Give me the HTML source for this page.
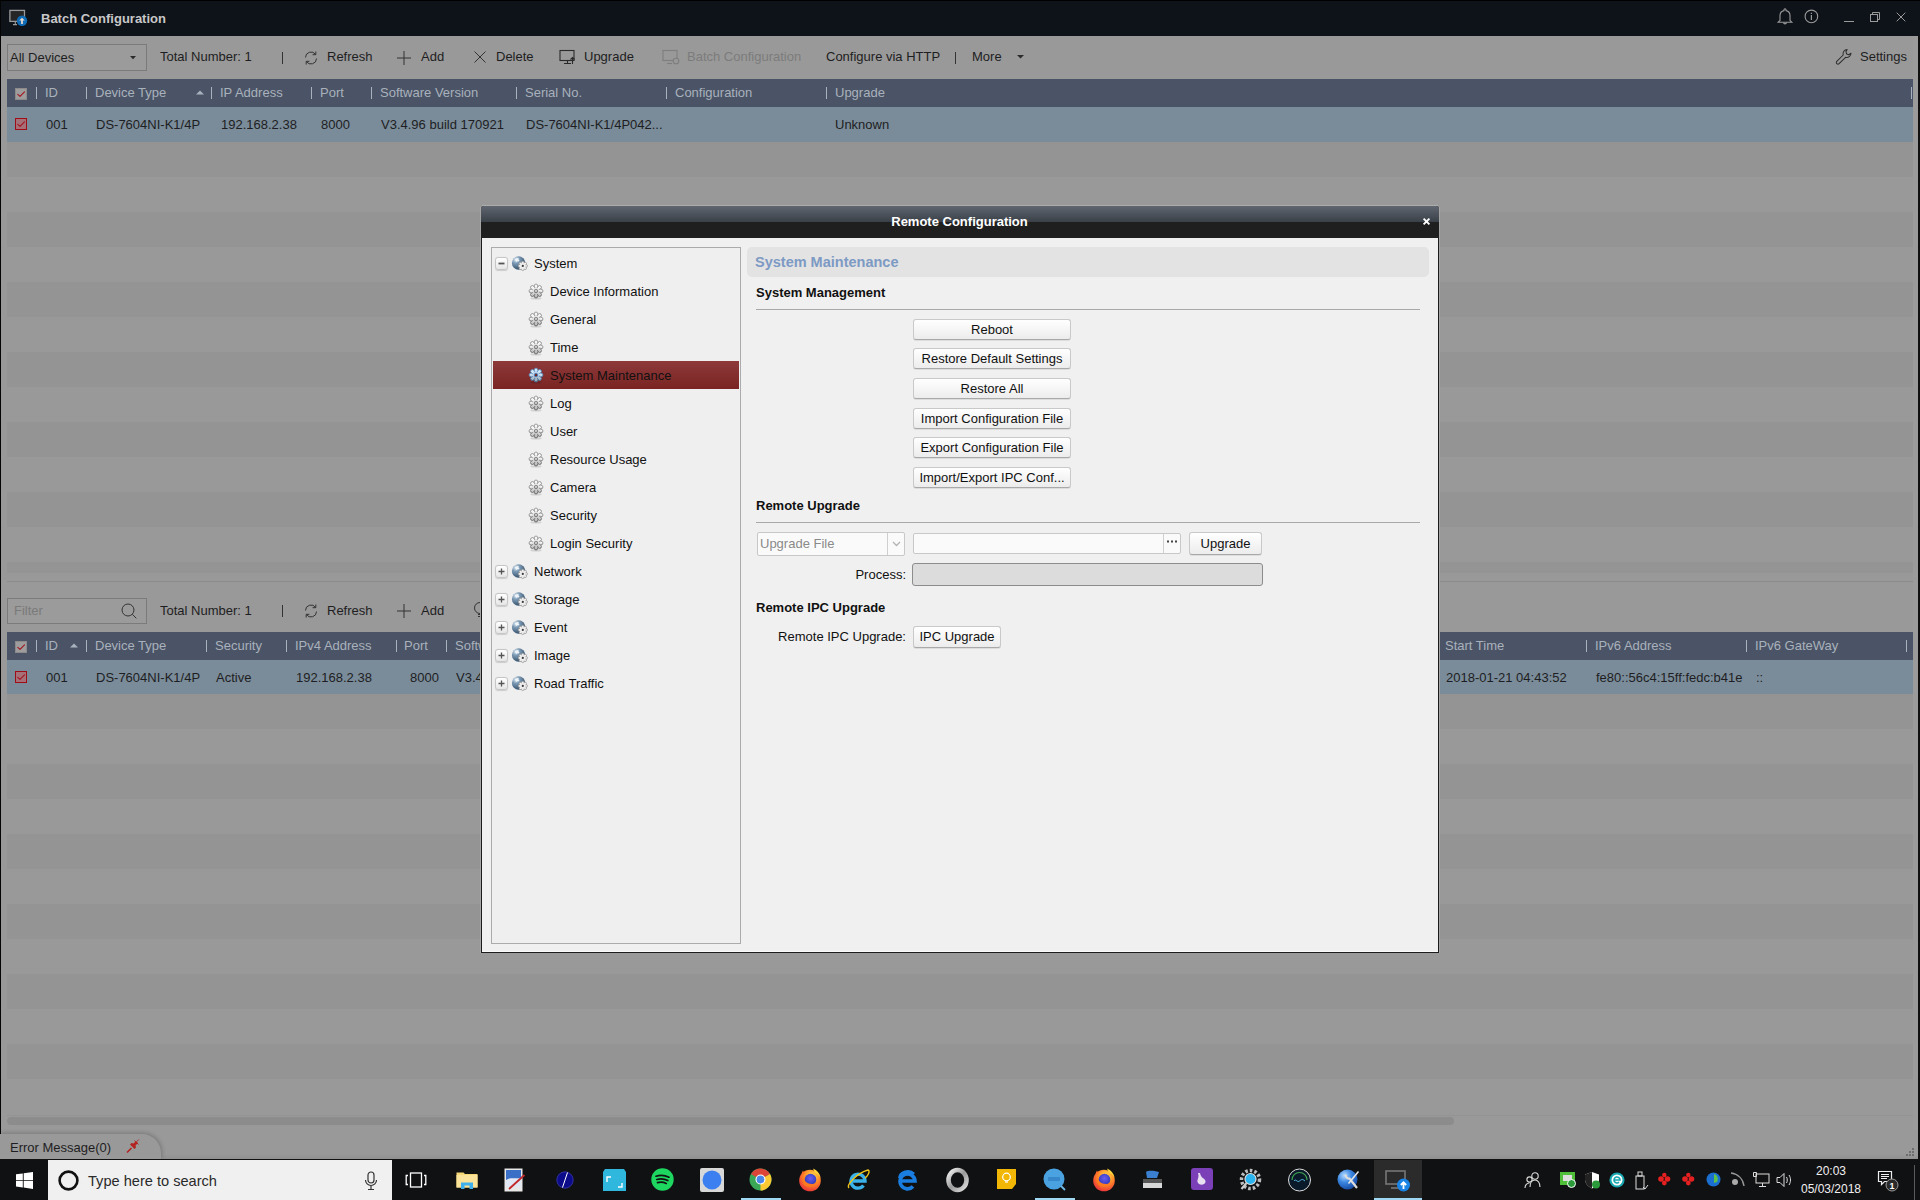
<!DOCTYPE html>
<html><head><meta charset="utf-8"><style>
html,body{margin:0;padding:0;}
body{width:1920px;height:1200px;overflow:hidden;position:relative;background:#999999;font-family:'Liberation Sans', sans-serif;}
.a{position:absolute;box-sizing:border-box;}
.t{position:absolute;white-space:nowrap;}
svg{position:absolute;overflow:visible;}
</style></head><body>
<div class="a" style="left:0px;top:0px;width:1920px;height:36px;background:#0e1219;"></div>
<div class="a" style="left:0px;top:0px;width:1px;height:1134px;background:#050505;"></div>
<div class="a" style="left:0px;top:0px;width:1920px;height:1px;background:#000;"></div>
<svg style="left:0px;top:0px" width="36" height="36" viewBox="0 0 36 36"><rect x="9.9" y="10.4" width="14.6" height="11" fill="#262626" stroke="#9a9a9a" stroke-width="1.3"/><path d="M15.3 22v2.4M13 24.6h4" stroke="#9a9a9a" stroke-width="1.1"/><circle cx="22" cy="20.8" r="5.2" fill="#0f6bb5"/><path d="M21.1 23.9v-3.3h-1.9l2.8-2.8 2.8 2.8h-1.9v3.3z" fill="#e6d9cc"/></svg>
<div class="t" style="left:41px;top:10.50px;font-size:13px;line-height:16px;font-weight:700;color:#c8c8c8;">Batch Configuration</div>
<svg style="left:1777px;top:8px" width="16" height="17" viewBox="0 0 16 17"><path d="M3 12.5V7.5a5 5 0 0 1 4-4.9V1.8a1 1 0 0 1 2 0v.8a5 5 0 0 1 4 4.9v5l1.8 1.7H1.2z" fill="none" stroke="#9a9a9a" stroke-width="1.1"/><path d="M6.5 14.8a1.6 1.6 0 0 0 3 0" stroke="#9a9a9a" stroke-width="1.1" fill="none"/></svg>
<svg style="left:1804px;top:9px" width="15" height="15" viewBox="0 0 15 15"><circle cx="7.4" cy="7.4" r="6.3" fill="none" stroke="#9a9a9a" stroke-width="1.1"/><path d="M7.4 6v5M7.4 3.8v1.2" stroke="#9a9a9a" stroke-width="1.2"/></svg>
<div class="a" style="left:1844px;top:21px;width:10px;height:1px;background:#9a9a9a;"></div>
<svg style="left:1869px;top:11px" width="12" height="12" viewBox="0 0 12 12"><rect x="1.5" y="3.5" width="7" height="7" fill="none" stroke="#9a9a9a" stroke-width="1"/><path d="M3.5 3.5v-2h7v7h-2" fill="none" stroke="#9a9a9a" stroke-width="1"/></svg>
<svg style="left:1896px;top:12px" width="10" height="10" viewBox="0 0 10 10"><path d="M0.7 0.7l8.6 8.6M9.3 0.7l-8.6 8.6" stroke="#9a9a9a" stroke-width="1"/></svg>
<div class="a" style="left:1918px;top:36px;width:2px;height:1124px;background:#101010;"></div>
<div class="a" style="left:1913px;top:36px;width:5px;height:1094px;background:#9b9b9b;"></div>
<div class="a" style="left:7px;top:44px;width:140px;height:27px;border:1px solid #7b7b7b;background:#9b9b9b;"></div>
<div class="t" style="left:10px;top:49.50px;font-size:13px;line-height:16px;font-weight:400;color:#1e1e22;">All Devices</div>
<svg style="left:130px;top:56px" width="6" height="4" viewBox="0 0 6 4"><path d="M0 0h6L3 3.2z" fill="#2a2a2a"/></svg>
<div class="t" style="left:160px;top:49.00px;font-size:13px;line-height:16px;font-weight:400;color:#1e1e22;">Total Number: 1</div>
<div class="a" style="left:282px;top:51.5px;width:1px;height:12px;background:#333;"></div>
<svg style="left:303px;top:49.5px" width="16" height="16" viewBox="0 0 16 16"><path d="M2.5 7.5A5.5 5.5 0 0 1 12.6 4.5M13.5 8.5A5.5 5.5 0 0 1 3.4 11.5" fill="none" stroke="#333" stroke-width="1"/><path d="M12.8 1.5v3.2H9.6M3.2 14.5v-3.2h3.2" fill="none" stroke="#333" stroke-width="1"/></svg>
<div class="t" style="left:327px;top:49.00px;font-size:13px;line-height:16px;font-weight:400;color:#1e1e22;">Refresh</div>
<svg style="left:396px;top:49.5px" width="16" height="16" viewBox="0 0 16 16"><path d="M8 1v14M1 8h14" stroke="#333" stroke-width="1"/></svg>
<div class="t" style="left:421px;top:49.00px;font-size:13px;line-height:16px;font-weight:400;color:#1e1e22;">Add</div>
<svg style="left:473px;top:50px" width="14" height="14" viewBox="0 0 14 14"><path d="M1.5 1.5l11 11M12.5 1.5l-11 11" stroke="#333" stroke-width="1"/></svg>
<div class="t" style="left:496px;top:49.00px;font-size:13px;line-height:16px;font-weight:400;color:#1e1e22;">Delete</div>
<svg style="left:559px;top:49px" width="18" height="16" viewBox="0 0 18 16"><rect x="1" y="1.5" width="14" height="10" fill="none" stroke="#2a2a2a" stroke-width="1.1"/><path d="M5 14.5h7M8.5 11.5v3" stroke="#2a2a2a" stroke-width="1.1"/><path d="M13.5 15V8.5M11.5 10.5l2-2 2 2" stroke="#2a2a2a" stroke-width="1.1" fill="none"/></svg>
<div class="t" style="left:584px;top:49.00px;font-size:13px;line-height:16px;font-weight:400;color:#1e1e22;">Upgrade</div>
<svg style="left:662px;top:49px" width="18" height="16" viewBox="0 0 18 16"><rect x="1" y="1.5" width="14" height="10" fill="none" stroke="#7e7e7e" stroke-width="1.1"/><path d="M5 14.5h5" stroke="#7e7e7e" stroke-width="1.1"/><circle cx="14" cy="12" r="2.8" fill="#999" stroke="#7e7e7e" stroke-width="1.1"/></svg>
<div class="t" style="left:687px;top:49.00px;font-size:13px;line-height:16px;font-weight:400;color:#7c7c7c;">Batch Configuration</div>
<div class="t" style="left:826px;top:49.00px;font-size:13px;line-height:16px;font-weight:400;color:#1e1e22;">Configure via HTTP</div>
<div class="a" style="left:955px;top:52px;width:1px;height:12px;background:#333;"></div>
<div class="t" style="left:972px;top:49.00px;font-size:13px;line-height:16px;font-weight:400;color:#1e1e22;">More</div>
<svg style="left:1017px;top:55px" width="7" height="4" viewBox="0 0 7 4"><path d="M0 0h7L3.5 3.5z" fill="#2a2a2a"/></svg>
<svg style="left:1835px;top:48px" width="18" height="18" viewBox="0 0 18 18"><path d="M12.2 1.6a4.2 4.2 0 0 0-4 5.4L1.8 13.4a1.6 1.6 0 0 0 2.3 2.3l6.5-6.4a4.2 4.2 0 0 0 5.4-4l-2.2 1.5-2.2-.9-.6-2.3z" fill="none" stroke="#2e2e2e" stroke-width="1.05" stroke-linejoin="round"/></svg>
<div class="t" style="left:1860px;top:49.00px;font-size:13px;line-height:16px;font-weight:400;color:#1e1e22;">Settings</div>
<div class="a" style="left:7px;top:107px;width:1906px;height:35px;background:#7a8c9a;"></div>
<div class="a" style="left:7px;top:142px;width:1906px;height:35px;background:#949494;"></div>
<div class="a" style="left:7px;top:212px;width:1906px;height:35px;background:#949494;"></div>
<div class="a" style="left:7px;top:282px;width:1906px;height:35px;background:#949494;"></div>
<div class="a" style="left:7px;top:352px;width:1906px;height:35px;background:#949494;"></div>
<div class="a" style="left:7px;top:422px;width:1906px;height:35px;background:#949494;"></div>
<div class="a" style="left:7px;top:492px;width:1906px;height:35px;background:#949494;"></div>
<div class="a" style="left:7px;top:562px;width:1906px;height:11px;background:#949494;"></div>
<div class="a" style="left:7px;top:79px;width:1906px;height:28px;background:#4a5466;"></div>
<div class="a" style="left:15px;top:87.5px;width:12px;height:12px;background:#9e9c9c;border:1px solid #8c8a8a;"></div>
<svg style="left:17px;top:90.5px" width="9" height="7" viewBox="0 0 9 7"><path d="M0.8 3.3L3 5.3 7.5 0.8" fill="none" stroke="#a31420" stroke-width="1.1" stroke-linecap="round" stroke-linejoin="round"/></svg>
<div class="a" style="left:36px;top:87px;width:1px;height:12px;background:#a9b1bc;"></div>
<div class="t" style="left:45px;top:85.00px;font-size:13px;line-height:16px;font-weight:400;color:#a9b1bc;">ID</div>
<div class="a" style="left:86px;top:87px;width:1px;height:12px;background:#a9b1bc;"></div>
<div class="t" style="left:95px;top:85.00px;font-size:13px;line-height:16px;font-weight:400;color:#a9b1bc;">Device Type</div>
<div class="a" style="left:211px;top:87px;width:1px;height:12px;background:#a9b1bc;"></div>
<div class="t" style="left:220px;top:85.00px;font-size:13px;line-height:16px;font-weight:400;color:#a9b1bc;">IP Address</div>
<div class="a" style="left:311px;top:87px;width:1px;height:12px;background:#a9b1bc;"></div>
<div class="t" style="left:320px;top:85.00px;font-size:13px;line-height:16px;font-weight:400;color:#a9b1bc;">Port</div>
<div class="a" style="left:371px;top:87px;width:1px;height:12px;background:#a9b1bc;"></div>
<div class="t" style="left:380px;top:85.00px;font-size:13px;line-height:16px;font-weight:400;color:#a9b1bc;">Software Version</div>
<div class="a" style="left:516px;top:87px;width:1px;height:12px;background:#a9b1bc;"></div>
<div class="t" style="left:525px;top:85.00px;font-size:13px;line-height:16px;font-weight:400;color:#a9b1bc;">Serial No.</div>
<div class="a" style="left:666px;top:87px;width:1px;height:12px;background:#a9b1bc;"></div>
<div class="t" style="left:675px;top:85.00px;font-size:13px;line-height:16px;font-weight:400;color:#a9b1bc;">Configuration</div>
<div class="a" style="left:826px;top:87px;width:1px;height:12px;background:#a9b1bc;"></div>
<div class="t" style="left:835px;top:85.00px;font-size:13px;line-height:16px;font-weight:400;color:#a9b1bc;">Upgrade</div>
<div class="a" style="left:1911px;top:87px;width:1px;height:12px;background:#a9b1bc;"></div>
<svg style="left:196px;top:90px" width="8" height="5" viewBox="0 0 8 5"><path d="M0 4.5h8L4 0.5z" fill="#a9b1bc"/></svg>
<div class="a" style="left:15px;top:118px;width:12px;height:12px;background:#a67078;border:1.5px solid #a00c16;"></div>
<svg style="left:17px;top:120.5px" width="9" height="7" viewBox="0 0 9 7"><path d="M0.8 3.3L3 5.3 7.5 0.8" fill="none" stroke="#a31420" stroke-width="1.1" stroke-linecap="round" stroke-linejoin="round"/></svg>
<div class="t" style="left:46px;top:116.50px;font-size:13px;line-height:16px;font-weight:400;color:#1e1e22;">001</div>
<div class="t" style="left:96px;top:116.50px;font-size:13px;line-height:16px;font-weight:400;color:#1e1e22;">DS-7604NI-K1/4P</div>
<div class="t" style="left:221px;top:116.50px;font-size:13px;line-height:16px;font-weight:400;color:#1e1e22;">192.168.2.38</div>
<div class="t" style="left:321px;top:116.50px;font-size:13px;line-height:16px;font-weight:400;color:#1e1e22;">8000</div>
<div class="t" style="left:381px;top:116.50px;font-size:13px;line-height:16px;font-weight:400;color:#1e1e22;">V3.4.96 build 170921</div>
<div class="t" style="left:526px;top:116.50px;font-size:13px;line-height:16px;font-weight:400;color:#1e1e22;">DS-7604NI-K1/4P042...</div>
<div class="t" style="left:835px;top:116.50px;font-size:13px;line-height:16px;font-weight:400;color:#1e1e22;">Unknown</div>
<div class="a" style="left:7px;top:581px;width:1906px;height:1px;background:#8a8a8a;"></div>
<div class="a" style="left:7px;top:598px;width:140px;height:26px;border:1px solid #7b7b7b;background:#9b9b9b;"></div>
<div class="t" style="left:14px;top:603.00px;font-size:13px;line-height:16px;font-weight:400;color:#7a7a7a;">Filter</div>
<svg style="left:120px;top:602px" width="18" height="18" viewBox="0 0 18 18"><circle cx="8" cy="8" r="6" fill="none" stroke="#333" stroke-width="1"/><path d="M12.3 12.3l4 4" stroke="#333" stroke-width="1"/></svg>
<div class="t" style="left:160px;top:602.50px;font-size:13px;line-height:16px;font-weight:400;color:#1e1e22;">Total Number: 1</div>
<div class="a" style="left:282px;top:605px;width:1px;height:12px;background:#333;"></div>
<svg style="left:303px;top:603px" width="16" height="16" viewBox="0 0 16 16"><path d="M2.5 7.5A5.5 5.5 0 0 1 12.6 4.5M13.5 8.5A5.5 5.5 0 0 1 3.4 11.5" fill="none" stroke="#333" stroke-width="1"/><path d="M12.8 1.5v3.2H9.6M3.2 14.5v-3.2h3.2" fill="none" stroke="#333" stroke-width="1"/></svg>
<div class="t" style="left:327px;top:602.50px;font-size:13px;line-height:16px;font-weight:400;color:#1e1e22;">Refresh</div>
<svg style="left:396px;top:603px" width="16" height="16" viewBox="0 0 16 16"><path d="M8 1v14M1 8h14" stroke="#333" stroke-width="1"/></svg>
<div class="t" style="left:421px;top:602.50px;font-size:13px;line-height:16px;font-weight:400;color:#1e1e22;">Add</div>
<svg style="left:472px;top:601px" width="16" height="20" viewBox="0 0 16 20"><circle cx="8" cy="7" r="5.5" fill="none" stroke="#333" stroke-width="1"/><path d="M6 13.5h4M6 15.5h4" stroke="#333" stroke-width="1"/></svg>
<div class="a" style="left:7px;top:659px;width:1906px;height:35px;background:#7a8c9a;"></div>
<div class="a" style="left:7px;top:694px;width:1906px;height:35px;background:#949494;"></div>
<div class="a" style="left:7px;top:764px;width:1906px;height:35px;background:#949494;"></div>
<div class="a" style="left:7px;top:834px;width:1906px;height:35px;background:#949494;"></div>
<div class="a" style="left:7px;top:904px;width:1906px;height:35px;background:#949494;"></div>
<div class="a" style="left:7px;top:974px;width:1906px;height:35px;background:#949494;"></div>
<div class="a" style="left:7px;top:1044px;width:1906px;height:35px;background:#949494;"></div>
<div class="a" style="left:7px;top:632px;width:1906px;height:28px;background:#4a5466;"></div>
<div class="a" style="left:15px;top:640.5px;width:12px;height:12px;background:#9e9c9c;border:1px solid #8c8a8a;"></div>
<svg style="left:17px;top:643.5px" width="9" height="7" viewBox="0 0 9 7"><path d="M0.8 3.3L3 5.3 7.5 0.8" fill="none" stroke="#a31420" stroke-width="1.1" stroke-linecap="round" stroke-linejoin="round"/></svg>
<div class="a" style="left:36px;top:640px;width:1px;height:12px;background:#a9b1bc;"></div>
<div class="t" style="left:45px;top:638.00px;font-size:13px;line-height:16px;font-weight:400;color:#a9b1bc;">ID</div>
<div class="a" style="left:86px;top:640px;width:1px;height:12px;background:#a9b1bc;"></div>
<div class="t" style="left:95px;top:638.00px;font-size:13px;line-height:16px;font-weight:400;color:#a9b1bc;">Device Type</div>
<div class="a" style="left:206px;top:640px;width:1px;height:12px;background:#a9b1bc;"></div>
<div class="t" style="left:215px;top:638.00px;font-size:13px;line-height:16px;font-weight:400;color:#a9b1bc;">Security</div>
<div class="a" style="left:286px;top:640px;width:1px;height:12px;background:#a9b1bc;"></div>
<div class="t" style="left:295px;top:638.00px;font-size:13px;line-height:16px;font-weight:400;color:#a9b1bc;">IPv4 Address</div>
<div class="a" style="left:396px;top:640px;width:1px;height:12px;background:#a9b1bc;"></div>
<div class="t" style="left:404px;top:638.00px;font-size:13px;line-height:16px;font-weight:400;color:#a9b1bc;">Port</div>
<div class="a" style="left:446px;top:640px;width:1px;height:12px;background:#a9b1bc;"></div>
<div class="t" style="left:455px;top:638.00px;font-size:13px;line-height:16px;font-weight:400;color:#a9b1bc;">Software</div>
<div class="a" style="left:1436px;top:640px;width:1px;height:12px;background:#a9b1bc;"></div>
<div class="t" style="left:1445px;top:638.00px;font-size:13px;line-height:16px;font-weight:400;color:#a9b1bc;">Start Time</div>
<div class="a" style="left:1586px;top:640px;width:1px;height:12px;background:#a9b1bc;"></div>
<div class="t" style="left:1595px;top:638.00px;font-size:13px;line-height:16px;font-weight:400;color:#a9b1bc;">IPv6 Address</div>
<div class="a" style="left:1746px;top:640px;width:1px;height:12px;background:#a9b1bc;"></div>
<div class="t" style="left:1755px;top:638.00px;font-size:13px;line-height:16px;font-weight:400;color:#a9b1bc;">IPv6 GateWay</div>
<div class="a" style="left:1906px;top:640px;width:1px;height:12px;background:#a9b1bc;"></div>
<svg style="left:70px;top:643px" width="8" height="5" viewBox="0 0 8 5"><path d="M0 4.5h8L4 0.5z" fill="#a9b1bc"/></svg>
<div class="a" style="left:15px;top:671px;width:12px;height:12px;background:#a67078;border:1.5px solid #a00c16;"></div>
<svg style="left:17px;top:673.5px" width="9" height="7" viewBox="0 0 9 7"><path d="M0.8 3.3L3 5.3 7.5 0.8" fill="none" stroke="#a31420" stroke-width="1.1" stroke-linecap="round" stroke-linejoin="round"/></svg>
<div class="t" style="left:46px;top:669.50px;font-size:13px;line-height:16px;font-weight:400;color:#1e1e22;">001</div>
<div class="t" style="left:96px;top:669.50px;font-size:13px;line-height:16px;font-weight:400;color:#1e1e22;">DS-7604NI-K1/4P</div>
<div class="t" style="left:216px;top:669.50px;font-size:13px;line-height:16px;font-weight:400;color:#1e1e22;">Active</div>
<div class="t" style="left:296px;top:669.50px;font-size:13px;line-height:16px;font-weight:400;color:#1e1e22;">192.168.2.38</div>
<div class="t" style="left:410px;top:669.50px;font-size:13px;line-height:16px;font-weight:400;color:#1e1e22;">8000</div>
<div class="t" style="left:456px;top:669.50px;font-size:13px;line-height:16px;font-weight:400;color:#1e1e22;">V3.4.96</div>
<div class="t" style="left:1446px;top:669.50px;font-size:13px;line-height:16px;font-weight:400;color:#1e1e22;">2018-01-21 04:43:52</div>
<div class="t" style="left:1596px;top:669.50px;font-size:13px;line-height:16px;font-weight:400;color:#1e1e22;">fe80::56c4:15ff:fedc:b41e</div>
<div class="t" style="left:1756px;top:669.50px;font-size:13px;line-height:16px;font-weight:400;color:#1e1e22;">::</div>
<div class="a" style="left:7px;top:1117px;width:1447px;height:8px;background:#8c8c8c;border-radius:4px;"></div>
<div class="a" style="left:7px;top:1115px;width:1906px;height:1px;background:#939393;"></div>
<div class="a" style="left:1px;top:1154px;width:1917px;height:5px;background:linear-gradient(rgba(0,0,0,0),rgba(0,0,0,0.06));"></div>
<div class="a" style="left:0px;top:1133.5px;width:161px;height:25.5px;background:#999999;border-top-right-radius:19px;box-shadow:1px -1px 4px rgba(0,0,0,0.22);"></div>
<div class="a" style="left:0px;top:1159px;width:1920px;height:1px;background:#111;"></div>
<div class="a" style="left:1912px;top:1148px;width:2px;height:2px;background:#6e6e6e;"></div>
<div class="a" style="left:1909px;top:1151px;width:2px;height:2px;background:#6e6e6e;"></div>
<div class="a" style="left:1912px;top:1151px;width:2px;height:2px;background:#6e6e6e;"></div>
<div class="a" style="left:1906px;top:1154px;width:2px;height:2px;background:#6e6e6e;"></div>
<div class="a" style="left:1909px;top:1154px;width:2px;height:2px;background:#6e6e6e;"></div>
<div class="a" style="left:1912px;top:1154px;width:2px;height:2px;background:#6e6e6e;"></div>
<div class="t" style="left:10px;top:1139.50px;font-size:13px;line-height:16px;font-weight:400;color:#1e1e22;">Error Message(0)</div>
<svg style="left:125px;top:1138px" width="16" height="16" viewBox="0 0 16 16"><path d="M2 14.5l4.5-4.5" stroke="#b52222" stroke-width="1.6"/><path d="M5 6.5l4.5 4.5 1.5-1.5-0.5-2 2.5-2.5-2-2-2.5 2.5-2-0.5z" fill="#b52222"/><path d="M9.5 2.5l4 4M13.8 1.5l-2 2" stroke="#b52222" stroke-width="1"/></svg>
<div class="a" style="left:482px;top:205px;width:956px;height:1px;background:#adadad;"></div>
<div class="a" style="left:480px;top:207px;width:1px;height:746px;background:#a6a6a6;"></div>
<div class="a" style="left:1439px;top:207px;width:1px;height:746px;background:#a6a6a6;"></div>
<div class="a" style="left:481px;top:206px;width:958px;height:747px;background:#1c1c1c;border-radius:3px 3px 0 0;"></div>
<div class="a" style="left:481px;top:206px;width:958px;height:16px;background:linear-gradient(#60666f,#3a4048);border-radius:3px 3px 0 0;"></div>
<div class="a" style="left:481px;top:222px;width:958px;height:16px;background:#1f1f1f;"></div>
<div class="a" style="left:482px;top:238px;width:956px;height:714px;background:#f0f0f0;border-bottom:1px solid #fafafa;"></div>
<div class="t" style="left:659.5px;width:600px;text-align:center;top:213.50px;font-size:13px;line-height:16px;font-weight:700;color:#ffffff;">Remote Configuration</div>
<svg style="left:1423px;top:217.5px" width="7" height="7" viewBox="0 0 7 7"><path d="M0.6 0.6l5.8 5.8M6.4 0.6l-5.8 5.8" stroke="#fff" stroke-width="1.9"/></svg>
<div class="a" style="left:491px;top:247px;width:250px;height:697px;background:#efefef;border:1px solid #ababab;"></div>
<div class="a" style="left:493px;top:361px;width:246px;height:28px;background:linear-gradient(#8e3a3a,#7a2323);"></div>
<div class="a" style="left:494.5px;top:256.5px;width:13px;height:13px;background:linear-gradient(#ffffff,#e6e6e6);border:1px solid #c6c6c6;border-radius:3px;box-shadow:0 0.5px 1px rgba(0,0,0,0.15);"></div>
<svg style="left:497.5px;top:259.5px" width="7" height="7" viewBox="0 0 7 7"><path d="M0.5 3.5h6" stroke="#555" stroke-width="1.8"/></svg>
<svg style="left:511px;top:256px" width="18" height="18" viewBox="0 0 18 18"><defs><radialGradient id="gg263" cx="30%" cy="25%" r="80%"><stop offset="0" stop-color="#e4eef6"/><stop offset="0.35" stop-color="#7d9bb6"/><stop offset="1" stop-color="#2f4b66"/></radialGradient></defs><circle cx="7.6" cy="7" r="6.7" fill="url(#gg263)"/><path d="M4 3.2c1.2-1 2.8-1.3 4-.8l-.6 1.4 1.2.4-1.5 1.5-.8-.6-1 1.2-.7-1.5z" fill="#f4f8fb" opacity="0.9"/><circle cx="15.10" cy="9.90" r="1.35" fill="#f2f2f2" stroke="#8c8c8c" stroke-width="0.7"/><circle cx="14.13" cy="12.23" r="1.35" fill="#f2f2f2" stroke="#8c8c8c" stroke-width="0.7"/><circle cx="11.80" cy="13.20" r="1.35" fill="#f2f2f2" stroke="#8c8c8c" stroke-width="0.7"/><circle cx="9.47" cy="12.23" r="1.35" fill="#f2f2f2" stroke="#8c8c8c" stroke-width="0.7"/><circle cx="8.50" cy="9.90" r="1.35" fill="#f2f2f2" stroke="#8c8c8c" stroke-width="0.7"/><circle cx="9.47" cy="7.57" r="1.35" fill="#f2f2f2" stroke="#8c8c8c" stroke-width="0.7"/><circle cx="11.80" cy="6.60" r="1.35" fill="#f2f2f2" stroke="#8c8c8c" stroke-width="0.7"/><circle cx="14.13" cy="7.57" r="1.35" fill="#f2f2f2" stroke="#8c8c8c" stroke-width="0.7"/><circle cx="11.8" cy="9.9" r="3" fill="#efefef"/><circle cx="11.8" cy="9.9" r="1.1" fill="#3a3a3a"/></svg>
<div class="t" style="left:534px;top:255.50px;font-size:13px;line-height:16px;font-weight:400;color:#111;">System</div>
<svg style="left:528px;top:283px" width="16" height="17" viewBox="0 0 16 17"><defs><clipPath id="gc1"><circle cx="8" cy="8" r="5.6"/><ellipse cx="8" cy="3.5" rx="2.3" ry="2.9" transform="rotate(0 8 8)"/><ellipse cx="8" cy="3.5" rx="2.3" ry="2.9" transform="rotate(45 8 8)"/><ellipse cx="8" cy="3.5" rx="2.3" ry="2.9" transform="rotate(90 8 8)"/><ellipse cx="8" cy="3.5" rx="2.3" ry="2.9" transform="rotate(135 8 8)"/><ellipse cx="8" cy="3.5" rx="2.3" ry="2.9" transform="rotate(180 8 8)"/><ellipse cx="8" cy="3.5" rx="2.3" ry="2.9" transform="rotate(225 8 8)"/><ellipse cx="8" cy="3.5" rx="2.3" ry="2.9" transform="rotate(270 8 8)"/><ellipse cx="8" cy="3.5" rx="2.3" ry="2.9" transform="rotate(315 8 8)"/></clipPath><linearGradient id="gs1" x1="0" y1="0" x2="0" y2="1"><stop offset="0" stop-color="#000" stop-opacity="0"/><stop offset="0.45" stop-color="#000" stop-opacity="0.02"/><stop offset="1" stop-color="#000" stop-opacity="0.35"/></linearGradient></defs><ellipse cx="8" cy="15.4" rx="5.5" ry="1.1" fill="#000" opacity="0.13"/><circle cx="8" cy="8" r="5.6" fill="#8a8a8a"/><ellipse cx="8" cy="3.5" rx="1.9" ry="2.5" fill="#f8f8f8" stroke="#858585" stroke-width="0.75" transform="rotate(0 8 8)"/><ellipse cx="8" cy="3.5" rx="1.9" ry="2.5" fill="#f8f8f8" stroke="#858585" stroke-width="0.75" transform="rotate(45 8 8)"/><ellipse cx="8" cy="3.5" rx="1.9" ry="2.5" fill="#f8f8f8" stroke="#858585" stroke-width="0.75" transform="rotate(90 8 8)"/><ellipse cx="8" cy="3.5" rx="1.9" ry="2.5" fill="#f8f8f8" stroke="#858585" stroke-width="0.75" transform="rotate(135 8 8)"/><ellipse cx="8" cy="3.5" rx="1.9" ry="2.5" fill="#f8f8f8" stroke="#858585" stroke-width="0.75" transform="rotate(180 8 8)"/><ellipse cx="8" cy="3.5" rx="1.9" ry="2.5" fill="#f8f8f8" stroke="#858585" stroke-width="0.75" transform="rotate(225 8 8)"/><ellipse cx="8" cy="3.5" rx="1.9" ry="2.5" fill="#f8f8f8" stroke="#858585" stroke-width="0.75" transform="rotate(270 8 8)"/><ellipse cx="8" cy="3.5" rx="1.9" ry="2.5" fill="#f8f8f8" stroke="#858585" stroke-width="0.75" transform="rotate(315 8 8)"/><circle cx="8" cy="8" r="3.3" fill="#ececec"/><circle cx="8" cy="8" r="1.7" fill="#cfcfcf" stroke="#858585" stroke-width="0.9"/><rect x="0" y="0" width="16" height="16" fill="url(#gs1)" clip-path="url(#gc1)"/></svg>
<div class="t" style="left:550px;top:283.50px;font-size:13px;line-height:16px;font-weight:400;color:#111;">Device Information</div>
<svg style="left:528px;top:311px" width="16" height="17" viewBox="0 0 16 17"><defs><clipPath id="gc2"><circle cx="8" cy="8" r="5.6"/><ellipse cx="8" cy="3.5" rx="2.3" ry="2.9" transform="rotate(0 8 8)"/><ellipse cx="8" cy="3.5" rx="2.3" ry="2.9" transform="rotate(45 8 8)"/><ellipse cx="8" cy="3.5" rx="2.3" ry="2.9" transform="rotate(90 8 8)"/><ellipse cx="8" cy="3.5" rx="2.3" ry="2.9" transform="rotate(135 8 8)"/><ellipse cx="8" cy="3.5" rx="2.3" ry="2.9" transform="rotate(180 8 8)"/><ellipse cx="8" cy="3.5" rx="2.3" ry="2.9" transform="rotate(225 8 8)"/><ellipse cx="8" cy="3.5" rx="2.3" ry="2.9" transform="rotate(270 8 8)"/><ellipse cx="8" cy="3.5" rx="2.3" ry="2.9" transform="rotate(315 8 8)"/></clipPath><linearGradient id="gs2" x1="0" y1="0" x2="0" y2="1"><stop offset="0" stop-color="#000" stop-opacity="0"/><stop offset="0.45" stop-color="#000" stop-opacity="0.02"/><stop offset="1" stop-color="#000" stop-opacity="0.35"/></linearGradient></defs><ellipse cx="8" cy="15.4" rx="5.5" ry="1.1" fill="#000" opacity="0.13"/><circle cx="8" cy="8" r="5.6" fill="#8a8a8a"/><ellipse cx="8" cy="3.5" rx="1.9" ry="2.5" fill="#f8f8f8" stroke="#858585" stroke-width="0.75" transform="rotate(0 8 8)"/><ellipse cx="8" cy="3.5" rx="1.9" ry="2.5" fill="#f8f8f8" stroke="#858585" stroke-width="0.75" transform="rotate(45 8 8)"/><ellipse cx="8" cy="3.5" rx="1.9" ry="2.5" fill="#f8f8f8" stroke="#858585" stroke-width="0.75" transform="rotate(90 8 8)"/><ellipse cx="8" cy="3.5" rx="1.9" ry="2.5" fill="#f8f8f8" stroke="#858585" stroke-width="0.75" transform="rotate(135 8 8)"/><ellipse cx="8" cy="3.5" rx="1.9" ry="2.5" fill="#f8f8f8" stroke="#858585" stroke-width="0.75" transform="rotate(180 8 8)"/><ellipse cx="8" cy="3.5" rx="1.9" ry="2.5" fill="#f8f8f8" stroke="#858585" stroke-width="0.75" transform="rotate(225 8 8)"/><ellipse cx="8" cy="3.5" rx="1.9" ry="2.5" fill="#f8f8f8" stroke="#858585" stroke-width="0.75" transform="rotate(270 8 8)"/><ellipse cx="8" cy="3.5" rx="1.9" ry="2.5" fill="#f8f8f8" stroke="#858585" stroke-width="0.75" transform="rotate(315 8 8)"/><circle cx="8" cy="8" r="3.3" fill="#ececec"/><circle cx="8" cy="8" r="1.7" fill="#cfcfcf" stroke="#858585" stroke-width="0.9"/><rect x="0" y="0" width="16" height="16" fill="url(#gs2)" clip-path="url(#gc2)"/></svg>
<div class="t" style="left:550px;top:311.50px;font-size:13px;line-height:16px;font-weight:400;color:#111;">General</div>
<svg style="left:528px;top:339px" width="16" height="17" viewBox="0 0 16 17"><defs><clipPath id="gc3"><circle cx="8" cy="8" r="5.6"/><ellipse cx="8" cy="3.5" rx="2.3" ry="2.9" transform="rotate(0 8 8)"/><ellipse cx="8" cy="3.5" rx="2.3" ry="2.9" transform="rotate(45 8 8)"/><ellipse cx="8" cy="3.5" rx="2.3" ry="2.9" transform="rotate(90 8 8)"/><ellipse cx="8" cy="3.5" rx="2.3" ry="2.9" transform="rotate(135 8 8)"/><ellipse cx="8" cy="3.5" rx="2.3" ry="2.9" transform="rotate(180 8 8)"/><ellipse cx="8" cy="3.5" rx="2.3" ry="2.9" transform="rotate(225 8 8)"/><ellipse cx="8" cy="3.5" rx="2.3" ry="2.9" transform="rotate(270 8 8)"/><ellipse cx="8" cy="3.5" rx="2.3" ry="2.9" transform="rotate(315 8 8)"/></clipPath><linearGradient id="gs3" x1="0" y1="0" x2="0" y2="1"><stop offset="0" stop-color="#000" stop-opacity="0"/><stop offset="0.45" stop-color="#000" stop-opacity="0.02"/><stop offset="1" stop-color="#000" stop-opacity="0.35"/></linearGradient></defs><ellipse cx="8" cy="15.4" rx="5.5" ry="1.1" fill="#000" opacity="0.13"/><circle cx="8" cy="8" r="5.6" fill="#8a8a8a"/><ellipse cx="8" cy="3.5" rx="1.9" ry="2.5" fill="#f8f8f8" stroke="#858585" stroke-width="0.75" transform="rotate(0 8 8)"/><ellipse cx="8" cy="3.5" rx="1.9" ry="2.5" fill="#f8f8f8" stroke="#858585" stroke-width="0.75" transform="rotate(45 8 8)"/><ellipse cx="8" cy="3.5" rx="1.9" ry="2.5" fill="#f8f8f8" stroke="#858585" stroke-width="0.75" transform="rotate(90 8 8)"/><ellipse cx="8" cy="3.5" rx="1.9" ry="2.5" fill="#f8f8f8" stroke="#858585" stroke-width="0.75" transform="rotate(135 8 8)"/><ellipse cx="8" cy="3.5" rx="1.9" ry="2.5" fill="#f8f8f8" stroke="#858585" stroke-width="0.75" transform="rotate(180 8 8)"/><ellipse cx="8" cy="3.5" rx="1.9" ry="2.5" fill="#f8f8f8" stroke="#858585" stroke-width="0.75" transform="rotate(225 8 8)"/><ellipse cx="8" cy="3.5" rx="1.9" ry="2.5" fill="#f8f8f8" stroke="#858585" stroke-width="0.75" transform="rotate(270 8 8)"/><ellipse cx="8" cy="3.5" rx="1.9" ry="2.5" fill="#f8f8f8" stroke="#858585" stroke-width="0.75" transform="rotate(315 8 8)"/><circle cx="8" cy="8" r="3.3" fill="#ececec"/><circle cx="8" cy="8" r="1.7" fill="#cfcfcf" stroke="#858585" stroke-width="0.9"/><rect x="0" y="0" width="16" height="16" fill="url(#gs3)" clip-path="url(#gc3)"/></svg>
<div class="t" style="left:550px;top:339.50px;font-size:13px;line-height:16px;font-weight:400;color:#111;">Time</div>
<svg style="left:528px;top:367px" width="16" height="17" viewBox="0 0 16 17"><defs><clipPath id="gc4"><circle cx="8" cy="8" r="5.6"/><ellipse cx="8" cy="3.5" rx="2.3" ry="2.9" transform="rotate(0 8 8)"/><ellipse cx="8" cy="3.5" rx="2.3" ry="2.9" transform="rotate(45 8 8)"/><ellipse cx="8" cy="3.5" rx="2.3" ry="2.9" transform="rotate(90 8 8)"/><ellipse cx="8" cy="3.5" rx="2.3" ry="2.9" transform="rotate(135 8 8)"/><ellipse cx="8" cy="3.5" rx="2.3" ry="2.9" transform="rotate(180 8 8)"/><ellipse cx="8" cy="3.5" rx="2.3" ry="2.9" transform="rotate(225 8 8)"/><ellipse cx="8" cy="3.5" rx="2.3" ry="2.9" transform="rotate(270 8 8)"/><ellipse cx="8" cy="3.5" rx="2.3" ry="2.9" transform="rotate(315 8 8)"/></clipPath><linearGradient id="gs4" x1="0" y1="0" x2="0" y2="1"><stop offset="0" stop-color="#000" stop-opacity="0"/><stop offset="0.45" stop-color="#000" stop-opacity="0.02"/><stop offset="1" stop-color="#000" stop-opacity="0.35"/></linearGradient></defs><ellipse cx="8" cy="15.4" rx="5.5" ry="1.1" fill="#000" opacity="0.13"/><circle cx="8" cy="8" r="5.6" fill="#5a8fc4"/><ellipse cx="8" cy="3.5" rx="1.9" ry="2.5" fill="#d4e8f8" stroke="#4f86be" stroke-width="0.75" transform="rotate(0 8 8)"/><ellipse cx="8" cy="3.5" rx="1.9" ry="2.5" fill="#d4e8f8" stroke="#4f86be" stroke-width="0.75" transform="rotate(45 8 8)"/><ellipse cx="8" cy="3.5" rx="1.9" ry="2.5" fill="#d4e8f8" stroke="#4f86be" stroke-width="0.75" transform="rotate(90 8 8)"/><ellipse cx="8" cy="3.5" rx="1.9" ry="2.5" fill="#d4e8f8" stroke="#4f86be" stroke-width="0.75" transform="rotate(135 8 8)"/><ellipse cx="8" cy="3.5" rx="1.9" ry="2.5" fill="#d4e8f8" stroke="#4f86be" stroke-width="0.75" transform="rotate(180 8 8)"/><ellipse cx="8" cy="3.5" rx="1.9" ry="2.5" fill="#d4e8f8" stroke="#4f86be" stroke-width="0.75" transform="rotate(225 8 8)"/><ellipse cx="8" cy="3.5" rx="1.9" ry="2.5" fill="#d4e8f8" stroke="#4f86be" stroke-width="0.75" transform="rotate(270 8 8)"/><ellipse cx="8" cy="3.5" rx="1.9" ry="2.5" fill="#d4e8f8" stroke="#4f86be" stroke-width="0.75" transform="rotate(315 8 8)"/><circle cx="8" cy="8" r="3.3" fill="#bcd8f0"/><circle cx="8" cy="8" r="1.7" fill="#7a2a2a" stroke="#4f86be" stroke-width="0.9"/><rect x="0" y="0" width="16" height="16" fill="url(#gs4)" clip-path="url(#gc4)"/></svg>
<div class="t" style="left:550px;top:367.50px;font-size:13px;line-height:16px;font-weight:400;color:#111;">System Maintenance</div>
<svg style="left:528px;top:395px" width="16" height="17" viewBox="0 0 16 17"><defs><clipPath id="gc5"><circle cx="8" cy="8" r="5.6"/><ellipse cx="8" cy="3.5" rx="2.3" ry="2.9" transform="rotate(0 8 8)"/><ellipse cx="8" cy="3.5" rx="2.3" ry="2.9" transform="rotate(45 8 8)"/><ellipse cx="8" cy="3.5" rx="2.3" ry="2.9" transform="rotate(90 8 8)"/><ellipse cx="8" cy="3.5" rx="2.3" ry="2.9" transform="rotate(135 8 8)"/><ellipse cx="8" cy="3.5" rx="2.3" ry="2.9" transform="rotate(180 8 8)"/><ellipse cx="8" cy="3.5" rx="2.3" ry="2.9" transform="rotate(225 8 8)"/><ellipse cx="8" cy="3.5" rx="2.3" ry="2.9" transform="rotate(270 8 8)"/><ellipse cx="8" cy="3.5" rx="2.3" ry="2.9" transform="rotate(315 8 8)"/></clipPath><linearGradient id="gs5" x1="0" y1="0" x2="0" y2="1"><stop offset="0" stop-color="#000" stop-opacity="0"/><stop offset="0.45" stop-color="#000" stop-opacity="0.02"/><stop offset="1" stop-color="#000" stop-opacity="0.35"/></linearGradient></defs><ellipse cx="8" cy="15.4" rx="5.5" ry="1.1" fill="#000" opacity="0.13"/><circle cx="8" cy="8" r="5.6" fill="#8a8a8a"/><ellipse cx="8" cy="3.5" rx="1.9" ry="2.5" fill="#f8f8f8" stroke="#858585" stroke-width="0.75" transform="rotate(0 8 8)"/><ellipse cx="8" cy="3.5" rx="1.9" ry="2.5" fill="#f8f8f8" stroke="#858585" stroke-width="0.75" transform="rotate(45 8 8)"/><ellipse cx="8" cy="3.5" rx="1.9" ry="2.5" fill="#f8f8f8" stroke="#858585" stroke-width="0.75" transform="rotate(90 8 8)"/><ellipse cx="8" cy="3.5" rx="1.9" ry="2.5" fill="#f8f8f8" stroke="#858585" stroke-width="0.75" transform="rotate(135 8 8)"/><ellipse cx="8" cy="3.5" rx="1.9" ry="2.5" fill="#f8f8f8" stroke="#858585" stroke-width="0.75" transform="rotate(180 8 8)"/><ellipse cx="8" cy="3.5" rx="1.9" ry="2.5" fill="#f8f8f8" stroke="#858585" stroke-width="0.75" transform="rotate(225 8 8)"/><ellipse cx="8" cy="3.5" rx="1.9" ry="2.5" fill="#f8f8f8" stroke="#858585" stroke-width="0.75" transform="rotate(270 8 8)"/><ellipse cx="8" cy="3.5" rx="1.9" ry="2.5" fill="#f8f8f8" stroke="#858585" stroke-width="0.75" transform="rotate(315 8 8)"/><circle cx="8" cy="8" r="3.3" fill="#ececec"/><circle cx="8" cy="8" r="1.7" fill="#cfcfcf" stroke="#858585" stroke-width="0.9"/><rect x="0" y="0" width="16" height="16" fill="url(#gs5)" clip-path="url(#gc5)"/></svg>
<div class="t" style="left:550px;top:395.50px;font-size:13px;line-height:16px;font-weight:400;color:#111;">Log</div>
<svg style="left:528px;top:423px" width="16" height="17" viewBox="0 0 16 17"><defs><clipPath id="gc6"><circle cx="8" cy="8" r="5.6"/><ellipse cx="8" cy="3.5" rx="2.3" ry="2.9" transform="rotate(0 8 8)"/><ellipse cx="8" cy="3.5" rx="2.3" ry="2.9" transform="rotate(45 8 8)"/><ellipse cx="8" cy="3.5" rx="2.3" ry="2.9" transform="rotate(90 8 8)"/><ellipse cx="8" cy="3.5" rx="2.3" ry="2.9" transform="rotate(135 8 8)"/><ellipse cx="8" cy="3.5" rx="2.3" ry="2.9" transform="rotate(180 8 8)"/><ellipse cx="8" cy="3.5" rx="2.3" ry="2.9" transform="rotate(225 8 8)"/><ellipse cx="8" cy="3.5" rx="2.3" ry="2.9" transform="rotate(270 8 8)"/><ellipse cx="8" cy="3.5" rx="2.3" ry="2.9" transform="rotate(315 8 8)"/></clipPath><linearGradient id="gs6" x1="0" y1="0" x2="0" y2="1"><stop offset="0" stop-color="#000" stop-opacity="0"/><stop offset="0.45" stop-color="#000" stop-opacity="0.02"/><stop offset="1" stop-color="#000" stop-opacity="0.35"/></linearGradient></defs><ellipse cx="8" cy="15.4" rx="5.5" ry="1.1" fill="#000" opacity="0.13"/><circle cx="8" cy="8" r="5.6" fill="#8a8a8a"/><ellipse cx="8" cy="3.5" rx="1.9" ry="2.5" fill="#f8f8f8" stroke="#858585" stroke-width="0.75" transform="rotate(0 8 8)"/><ellipse cx="8" cy="3.5" rx="1.9" ry="2.5" fill="#f8f8f8" stroke="#858585" stroke-width="0.75" transform="rotate(45 8 8)"/><ellipse cx="8" cy="3.5" rx="1.9" ry="2.5" fill="#f8f8f8" stroke="#858585" stroke-width="0.75" transform="rotate(90 8 8)"/><ellipse cx="8" cy="3.5" rx="1.9" ry="2.5" fill="#f8f8f8" stroke="#858585" stroke-width="0.75" transform="rotate(135 8 8)"/><ellipse cx="8" cy="3.5" rx="1.9" ry="2.5" fill="#f8f8f8" stroke="#858585" stroke-width="0.75" transform="rotate(180 8 8)"/><ellipse cx="8" cy="3.5" rx="1.9" ry="2.5" fill="#f8f8f8" stroke="#858585" stroke-width="0.75" transform="rotate(225 8 8)"/><ellipse cx="8" cy="3.5" rx="1.9" ry="2.5" fill="#f8f8f8" stroke="#858585" stroke-width="0.75" transform="rotate(270 8 8)"/><ellipse cx="8" cy="3.5" rx="1.9" ry="2.5" fill="#f8f8f8" stroke="#858585" stroke-width="0.75" transform="rotate(315 8 8)"/><circle cx="8" cy="8" r="3.3" fill="#ececec"/><circle cx="8" cy="8" r="1.7" fill="#cfcfcf" stroke="#858585" stroke-width="0.9"/><rect x="0" y="0" width="16" height="16" fill="url(#gs6)" clip-path="url(#gc6)"/></svg>
<div class="t" style="left:550px;top:423.50px;font-size:13px;line-height:16px;font-weight:400;color:#111;">User</div>
<svg style="left:528px;top:451px" width="16" height="17" viewBox="0 0 16 17"><defs><clipPath id="gc7"><circle cx="8" cy="8" r="5.6"/><ellipse cx="8" cy="3.5" rx="2.3" ry="2.9" transform="rotate(0 8 8)"/><ellipse cx="8" cy="3.5" rx="2.3" ry="2.9" transform="rotate(45 8 8)"/><ellipse cx="8" cy="3.5" rx="2.3" ry="2.9" transform="rotate(90 8 8)"/><ellipse cx="8" cy="3.5" rx="2.3" ry="2.9" transform="rotate(135 8 8)"/><ellipse cx="8" cy="3.5" rx="2.3" ry="2.9" transform="rotate(180 8 8)"/><ellipse cx="8" cy="3.5" rx="2.3" ry="2.9" transform="rotate(225 8 8)"/><ellipse cx="8" cy="3.5" rx="2.3" ry="2.9" transform="rotate(270 8 8)"/><ellipse cx="8" cy="3.5" rx="2.3" ry="2.9" transform="rotate(315 8 8)"/></clipPath><linearGradient id="gs7" x1="0" y1="0" x2="0" y2="1"><stop offset="0" stop-color="#000" stop-opacity="0"/><stop offset="0.45" stop-color="#000" stop-opacity="0.02"/><stop offset="1" stop-color="#000" stop-opacity="0.35"/></linearGradient></defs><ellipse cx="8" cy="15.4" rx="5.5" ry="1.1" fill="#000" opacity="0.13"/><circle cx="8" cy="8" r="5.6" fill="#8a8a8a"/><ellipse cx="8" cy="3.5" rx="1.9" ry="2.5" fill="#f8f8f8" stroke="#858585" stroke-width="0.75" transform="rotate(0 8 8)"/><ellipse cx="8" cy="3.5" rx="1.9" ry="2.5" fill="#f8f8f8" stroke="#858585" stroke-width="0.75" transform="rotate(45 8 8)"/><ellipse cx="8" cy="3.5" rx="1.9" ry="2.5" fill="#f8f8f8" stroke="#858585" stroke-width="0.75" transform="rotate(90 8 8)"/><ellipse cx="8" cy="3.5" rx="1.9" ry="2.5" fill="#f8f8f8" stroke="#858585" stroke-width="0.75" transform="rotate(135 8 8)"/><ellipse cx="8" cy="3.5" rx="1.9" ry="2.5" fill="#f8f8f8" stroke="#858585" stroke-width="0.75" transform="rotate(180 8 8)"/><ellipse cx="8" cy="3.5" rx="1.9" ry="2.5" fill="#f8f8f8" stroke="#858585" stroke-width="0.75" transform="rotate(225 8 8)"/><ellipse cx="8" cy="3.5" rx="1.9" ry="2.5" fill="#f8f8f8" stroke="#858585" stroke-width="0.75" transform="rotate(270 8 8)"/><ellipse cx="8" cy="3.5" rx="1.9" ry="2.5" fill="#f8f8f8" stroke="#858585" stroke-width="0.75" transform="rotate(315 8 8)"/><circle cx="8" cy="8" r="3.3" fill="#ececec"/><circle cx="8" cy="8" r="1.7" fill="#cfcfcf" stroke="#858585" stroke-width="0.9"/><rect x="0" y="0" width="16" height="16" fill="url(#gs7)" clip-path="url(#gc7)"/></svg>
<div class="t" style="left:550px;top:451.50px;font-size:13px;line-height:16px;font-weight:400;color:#111;">Resource Usage</div>
<svg style="left:528px;top:479px" width="16" height="17" viewBox="0 0 16 17"><defs><clipPath id="gc8"><circle cx="8" cy="8" r="5.6"/><ellipse cx="8" cy="3.5" rx="2.3" ry="2.9" transform="rotate(0 8 8)"/><ellipse cx="8" cy="3.5" rx="2.3" ry="2.9" transform="rotate(45 8 8)"/><ellipse cx="8" cy="3.5" rx="2.3" ry="2.9" transform="rotate(90 8 8)"/><ellipse cx="8" cy="3.5" rx="2.3" ry="2.9" transform="rotate(135 8 8)"/><ellipse cx="8" cy="3.5" rx="2.3" ry="2.9" transform="rotate(180 8 8)"/><ellipse cx="8" cy="3.5" rx="2.3" ry="2.9" transform="rotate(225 8 8)"/><ellipse cx="8" cy="3.5" rx="2.3" ry="2.9" transform="rotate(270 8 8)"/><ellipse cx="8" cy="3.5" rx="2.3" ry="2.9" transform="rotate(315 8 8)"/></clipPath><linearGradient id="gs8" x1="0" y1="0" x2="0" y2="1"><stop offset="0" stop-color="#000" stop-opacity="0"/><stop offset="0.45" stop-color="#000" stop-opacity="0.02"/><stop offset="1" stop-color="#000" stop-opacity="0.35"/></linearGradient></defs><ellipse cx="8" cy="15.4" rx="5.5" ry="1.1" fill="#000" opacity="0.13"/><circle cx="8" cy="8" r="5.6" fill="#8a8a8a"/><ellipse cx="8" cy="3.5" rx="1.9" ry="2.5" fill="#f8f8f8" stroke="#858585" stroke-width="0.75" transform="rotate(0 8 8)"/><ellipse cx="8" cy="3.5" rx="1.9" ry="2.5" fill="#f8f8f8" stroke="#858585" stroke-width="0.75" transform="rotate(45 8 8)"/><ellipse cx="8" cy="3.5" rx="1.9" ry="2.5" fill="#f8f8f8" stroke="#858585" stroke-width="0.75" transform="rotate(90 8 8)"/><ellipse cx="8" cy="3.5" rx="1.9" ry="2.5" fill="#f8f8f8" stroke="#858585" stroke-width="0.75" transform="rotate(135 8 8)"/><ellipse cx="8" cy="3.5" rx="1.9" ry="2.5" fill="#f8f8f8" stroke="#858585" stroke-width="0.75" transform="rotate(180 8 8)"/><ellipse cx="8" cy="3.5" rx="1.9" ry="2.5" fill="#f8f8f8" stroke="#858585" stroke-width="0.75" transform="rotate(225 8 8)"/><ellipse cx="8" cy="3.5" rx="1.9" ry="2.5" fill="#f8f8f8" stroke="#858585" stroke-width="0.75" transform="rotate(270 8 8)"/><ellipse cx="8" cy="3.5" rx="1.9" ry="2.5" fill="#f8f8f8" stroke="#858585" stroke-width="0.75" transform="rotate(315 8 8)"/><circle cx="8" cy="8" r="3.3" fill="#ececec"/><circle cx="8" cy="8" r="1.7" fill="#cfcfcf" stroke="#858585" stroke-width="0.9"/><rect x="0" y="0" width="16" height="16" fill="url(#gs8)" clip-path="url(#gc8)"/></svg>
<div class="t" style="left:550px;top:479.50px;font-size:13px;line-height:16px;font-weight:400;color:#111;">Camera</div>
<svg style="left:528px;top:507px" width="16" height="17" viewBox="0 0 16 17"><defs><clipPath id="gc9"><circle cx="8" cy="8" r="5.6"/><ellipse cx="8" cy="3.5" rx="2.3" ry="2.9" transform="rotate(0 8 8)"/><ellipse cx="8" cy="3.5" rx="2.3" ry="2.9" transform="rotate(45 8 8)"/><ellipse cx="8" cy="3.5" rx="2.3" ry="2.9" transform="rotate(90 8 8)"/><ellipse cx="8" cy="3.5" rx="2.3" ry="2.9" transform="rotate(135 8 8)"/><ellipse cx="8" cy="3.5" rx="2.3" ry="2.9" transform="rotate(180 8 8)"/><ellipse cx="8" cy="3.5" rx="2.3" ry="2.9" transform="rotate(225 8 8)"/><ellipse cx="8" cy="3.5" rx="2.3" ry="2.9" transform="rotate(270 8 8)"/><ellipse cx="8" cy="3.5" rx="2.3" ry="2.9" transform="rotate(315 8 8)"/></clipPath><linearGradient id="gs9" x1="0" y1="0" x2="0" y2="1"><stop offset="0" stop-color="#000" stop-opacity="0"/><stop offset="0.45" stop-color="#000" stop-opacity="0.02"/><stop offset="1" stop-color="#000" stop-opacity="0.35"/></linearGradient></defs><ellipse cx="8" cy="15.4" rx="5.5" ry="1.1" fill="#000" opacity="0.13"/><circle cx="8" cy="8" r="5.6" fill="#8a8a8a"/><ellipse cx="8" cy="3.5" rx="1.9" ry="2.5" fill="#f8f8f8" stroke="#858585" stroke-width="0.75" transform="rotate(0 8 8)"/><ellipse cx="8" cy="3.5" rx="1.9" ry="2.5" fill="#f8f8f8" stroke="#858585" stroke-width="0.75" transform="rotate(45 8 8)"/><ellipse cx="8" cy="3.5" rx="1.9" ry="2.5" fill="#f8f8f8" stroke="#858585" stroke-width="0.75" transform="rotate(90 8 8)"/><ellipse cx="8" cy="3.5" rx="1.9" ry="2.5" fill="#f8f8f8" stroke="#858585" stroke-width="0.75" transform="rotate(135 8 8)"/><ellipse cx="8" cy="3.5" rx="1.9" ry="2.5" fill="#f8f8f8" stroke="#858585" stroke-width="0.75" transform="rotate(180 8 8)"/><ellipse cx="8" cy="3.5" rx="1.9" ry="2.5" fill="#f8f8f8" stroke="#858585" stroke-width="0.75" transform="rotate(225 8 8)"/><ellipse cx="8" cy="3.5" rx="1.9" ry="2.5" fill="#f8f8f8" stroke="#858585" stroke-width="0.75" transform="rotate(270 8 8)"/><ellipse cx="8" cy="3.5" rx="1.9" ry="2.5" fill="#f8f8f8" stroke="#858585" stroke-width="0.75" transform="rotate(315 8 8)"/><circle cx="8" cy="8" r="3.3" fill="#ececec"/><circle cx="8" cy="8" r="1.7" fill="#cfcfcf" stroke="#858585" stroke-width="0.9"/><rect x="0" y="0" width="16" height="16" fill="url(#gs9)" clip-path="url(#gc9)"/></svg>
<div class="t" style="left:550px;top:507.50px;font-size:13px;line-height:16px;font-weight:400;color:#111;">Security</div>
<svg style="left:528px;top:535px" width="16" height="17" viewBox="0 0 16 17"><defs><clipPath id="gc10"><circle cx="8" cy="8" r="5.6"/><ellipse cx="8" cy="3.5" rx="2.3" ry="2.9" transform="rotate(0 8 8)"/><ellipse cx="8" cy="3.5" rx="2.3" ry="2.9" transform="rotate(45 8 8)"/><ellipse cx="8" cy="3.5" rx="2.3" ry="2.9" transform="rotate(90 8 8)"/><ellipse cx="8" cy="3.5" rx="2.3" ry="2.9" transform="rotate(135 8 8)"/><ellipse cx="8" cy="3.5" rx="2.3" ry="2.9" transform="rotate(180 8 8)"/><ellipse cx="8" cy="3.5" rx="2.3" ry="2.9" transform="rotate(225 8 8)"/><ellipse cx="8" cy="3.5" rx="2.3" ry="2.9" transform="rotate(270 8 8)"/><ellipse cx="8" cy="3.5" rx="2.3" ry="2.9" transform="rotate(315 8 8)"/></clipPath><linearGradient id="gs10" x1="0" y1="0" x2="0" y2="1"><stop offset="0" stop-color="#000" stop-opacity="0"/><stop offset="0.45" stop-color="#000" stop-opacity="0.02"/><stop offset="1" stop-color="#000" stop-opacity="0.35"/></linearGradient></defs><ellipse cx="8" cy="15.4" rx="5.5" ry="1.1" fill="#000" opacity="0.13"/><circle cx="8" cy="8" r="5.6" fill="#8a8a8a"/><ellipse cx="8" cy="3.5" rx="1.9" ry="2.5" fill="#f8f8f8" stroke="#858585" stroke-width="0.75" transform="rotate(0 8 8)"/><ellipse cx="8" cy="3.5" rx="1.9" ry="2.5" fill="#f8f8f8" stroke="#858585" stroke-width="0.75" transform="rotate(45 8 8)"/><ellipse cx="8" cy="3.5" rx="1.9" ry="2.5" fill="#f8f8f8" stroke="#858585" stroke-width="0.75" transform="rotate(90 8 8)"/><ellipse cx="8" cy="3.5" rx="1.9" ry="2.5" fill="#f8f8f8" stroke="#858585" stroke-width="0.75" transform="rotate(135 8 8)"/><ellipse cx="8" cy="3.5" rx="1.9" ry="2.5" fill="#f8f8f8" stroke="#858585" stroke-width="0.75" transform="rotate(180 8 8)"/><ellipse cx="8" cy="3.5" rx="1.9" ry="2.5" fill="#f8f8f8" stroke="#858585" stroke-width="0.75" transform="rotate(225 8 8)"/><ellipse cx="8" cy="3.5" rx="1.9" ry="2.5" fill="#f8f8f8" stroke="#858585" stroke-width="0.75" transform="rotate(270 8 8)"/><ellipse cx="8" cy="3.5" rx="1.9" ry="2.5" fill="#f8f8f8" stroke="#858585" stroke-width="0.75" transform="rotate(315 8 8)"/><circle cx="8" cy="8" r="3.3" fill="#ececec"/><circle cx="8" cy="8" r="1.7" fill="#cfcfcf" stroke="#858585" stroke-width="0.9"/><rect x="0" y="0" width="16" height="16" fill="url(#gs10)" clip-path="url(#gc10)"/></svg>
<div class="t" style="left:550px;top:535.50px;font-size:13px;line-height:16px;font-weight:400;color:#111;">Login Security</div>
<div class="a" style="left:494.5px;top:564.5px;width:13px;height:13px;background:linear-gradient(#ffffff,#e6e6e6);border:1px solid #c6c6c6;border-radius:3px;box-shadow:0 0.5px 1px rgba(0,0,0,0.15);"></div>
<svg style="left:497.5px;top:567.5px" width="7" height="7" viewBox="0 0 7 7"><path d="M0.5 3.5h6M3.5 0.5v6" stroke="#555" stroke-width="1.3"/></svg>
<svg style="left:511px;top:564px" width="18" height="18" viewBox="0 0 18 18"><defs><radialGradient id="gg571" cx="30%" cy="25%" r="80%"><stop offset="0" stop-color="#e4eef6"/><stop offset="0.35" stop-color="#7d9bb6"/><stop offset="1" stop-color="#2f4b66"/></radialGradient></defs><circle cx="7.6" cy="7" r="6.7" fill="url(#gg571)"/><path d="M4 3.2c1.2-1 2.8-1.3 4-.8l-.6 1.4 1.2.4-1.5 1.5-.8-.6-1 1.2-.7-1.5z" fill="#f4f8fb" opacity="0.9"/><circle cx="15.10" cy="9.90" r="1.35" fill="#f2f2f2" stroke="#8c8c8c" stroke-width="0.7"/><circle cx="14.13" cy="12.23" r="1.35" fill="#f2f2f2" stroke="#8c8c8c" stroke-width="0.7"/><circle cx="11.80" cy="13.20" r="1.35" fill="#f2f2f2" stroke="#8c8c8c" stroke-width="0.7"/><circle cx="9.47" cy="12.23" r="1.35" fill="#f2f2f2" stroke="#8c8c8c" stroke-width="0.7"/><circle cx="8.50" cy="9.90" r="1.35" fill="#f2f2f2" stroke="#8c8c8c" stroke-width="0.7"/><circle cx="9.47" cy="7.57" r="1.35" fill="#f2f2f2" stroke="#8c8c8c" stroke-width="0.7"/><circle cx="11.80" cy="6.60" r="1.35" fill="#f2f2f2" stroke="#8c8c8c" stroke-width="0.7"/><circle cx="14.13" cy="7.57" r="1.35" fill="#f2f2f2" stroke="#8c8c8c" stroke-width="0.7"/><circle cx="11.8" cy="9.9" r="3" fill="#efefef"/><circle cx="11.8" cy="9.9" r="1.1" fill="#3a3a3a"/></svg>
<div class="t" style="left:534px;top:563.50px;font-size:13px;line-height:16px;font-weight:400;color:#111;">Network</div>
<div class="a" style="left:494.5px;top:592.5px;width:13px;height:13px;background:linear-gradient(#ffffff,#e6e6e6);border:1px solid #c6c6c6;border-radius:3px;box-shadow:0 0.5px 1px rgba(0,0,0,0.15);"></div>
<svg style="left:497.5px;top:595.5px" width="7" height="7" viewBox="0 0 7 7"><path d="M0.5 3.5h6M3.5 0.5v6" stroke="#555" stroke-width="1.3"/></svg>
<svg style="left:511px;top:592px" width="18" height="18" viewBox="0 0 18 18"><defs><radialGradient id="gg599" cx="30%" cy="25%" r="80%"><stop offset="0" stop-color="#e4eef6"/><stop offset="0.35" stop-color="#7d9bb6"/><stop offset="1" stop-color="#2f4b66"/></radialGradient></defs><circle cx="7.6" cy="7" r="6.7" fill="url(#gg599)"/><path d="M4 3.2c1.2-1 2.8-1.3 4-.8l-.6 1.4 1.2.4-1.5 1.5-.8-.6-1 1.2-.7-1.5z" fill="#f4f8fb" opacity="0.9"/><circle cx="15.10" cy="9.90" r="1.35" fill="#f2f2f2" stroke="#8c8c8c" stroke-width="0.7"/><circle cx="14.13" cy="12.23" r="1.35" fill="#f2f2f2" stroke="#8c8c8c" stroke-width="0.7"/><circle cx="11.80" cy="13.20" r="1.35" fill="#f2f2f2" stroke="#8c8c8c" stroke-width="0.7"/><circle cx="9.47" cy="12.23" r="1.35" fill="#f2f2f2" stroke="#8c8c8c" stroke-width="0.7"/><circle cx="8.50" cy="9.90" r="1.35" fill="#f2f2f2" stroke="#8c8c8c" stroke-width="0.7"/><circle cx="9.47" cy="7.57" r="1.35" fill="#f2f2f2" stroke="#8c8c8c" stroke-width="0.7"/><circle cx="11.80" cy="6.60" r="1.35" fill="#f2f2f2" stroke="#8c8c8c" stroke-width="0.7"/><circle cx="14.13" cy="7.57" r="1.35" fill="#f2f2f2" stroke="#8c8c8c" stroke-width="0.7"/><circle cx="11.8" cy="9.9" r="3" fill="#efefef"/><circle cx="11.8" cy="9.9" r="1.1" fill="#3a3a3a"/></svg>
<div class="t" style="left:534px;top:591.50px;font-size:13px;line-height:16px;font-weight:400;color:#111;">Storage</div>
<div class="a" style="left:494.5px;top:620.5px;width:13px;height:13px;background:linear-gradient(#ffffff,#e6e6e6);border:1px solid #c6c6c6;border-radius:3px;box-shadow:0 0.5px 1px rgba(0,0,0,0.15);"></div>
<svg style="left:497.5px;top:623.5px" width="7" height="7" viewBox="0 0 7 7"><path d="M0.5 3.5h6M3.5 0.5v6" stroke="#555" stroke-width="1.3"/></svg>
<svg style="left:511px;top:620px" width="18" height="18" viewBox="0 0 18 18"><defs><radialGradient id="gg627" cx="30%" cy="25%" r="80%"><stop offset="0" stop-color="#e4eef6"/><stop offset="0.35" stop-color="#7d9bb6"/><stop offset="1" stop-color="#2f4b66"/></radialGradient></defs><circle cx="7.6" cy="7" r="6.7" fill="url(#gg627)"/><path d="M4 3.2c1.2-1 2.8-1.3 4-.8l-.6 1.4 1.2.4-1.5 1.5-.8-.6-1 1.2-.7-1.5z" fill="#f4f8fb" opacity="0.9"/><circle cx="15.10" cy="9.90" r="1.35" fill="#f2f2f2" stroke="#8c8c8c" stroke-width="0.7"/><circle cx="14.13" cy="12.23" r="1.35" fill="#f2f2f2" stroke="#8c8c8c" stroke-width="0.7"/><circle cx="11.80" cy="13.20" r="1.35" fill="#f2f2f2" stroke="#8c8c8c" stroke-width="0.7"/><circle cx="9.47" cy="12.23" r="1.35" fill="#f2f2f2" stroke="#8c8c8c" stroke-width="0.7"/><circle cx="8.50" cy="9.90" r="1.35" fill="#f2f2f2" stroke="#8c8c8c" stroke-width="0.7"/><circle cx="9.47" cy="7.57" r="1.35" fill="#f2f2f2" stroke="#8c8c8c" stroke-width="0.7"/><circle cx="11.80" cy="6.60" r="1.35" fill="#f2f2f2" stroke="#8c8c8c" stroke-width="0.7"/><circle cx="14.13" cy="7.57" r="1.35" fill="#f2f2f2" stroke="#8c8c8c" stroke-width="0.7"/><circle cx="11.8" cy="9.9" r="3" fill="#efefef"/><circle cx="11.8" cy="9.9" r="1.1" fill="#3a3a3a"/></svg>
<div class="t" style="left:534px;top:619.50px;font-size:13px;line-height:16px;font-weight:400;color:#111;">Event</div>
<div class="a" style="left:494.5px;top:648.5px;width:13px;height:13px;background:linear-gradient(#ffffff,#e6e6e6);border:1px solid #c6c6c6;border-radius:3px;box-shadow:0 0.5px 1px rgba(0,0,0,0.15);"></div>
<svg style="left:497.5px;top:651.5px" width="7" height="7" viewBox="0 0 7 7"><path d="M0.5 3.5h6M3.5 0.5v6" stroke="#555" stroke-width="1.3"/></svg>
<svg style="left:511px;top:648px" width="18" height="18" viewBox="0 0 18 18"><defs><radialGradient id="gg655" cx="30%" cy="25%" r="80%"><stop offset="0" stop-color="#e4eef6"/><stop offset="0.35" stop-color="#7d9bb6"/><stop offset="1" stop-color="#2f4b66"/></radialGradient></defs><circle cx="7.6" cy="7" r="6.7" fill="url(#gg655)"/><path d="M4 3.2c1.2-1 2.8-1.3 4-.8l-.6 1.4 1.2.4-1.5 1.5-.8-.6-1 1.2-.7-1.5z" fill="#f4f8fb" opacity="0.9"/><circle cx="15.10" cy="9.90" r="1.35" fill="#f2f2f2" stroke="#8c8c8c" stroke-width="0.7"/><circle cx="14.13" cy="12.23" r="1.35" fill="#f2f2f2" stroke="#8c8c8c" stroke-width="0.7"/><circle cx="11.80" cy="13.20" r="1.35" fill="#f2f2f2" stroke="#8c8c8c" stroke-width="0.7"/><circle cx="9.47" cy="12.23" r="1.35" fill="#f2f2f2" stroke="#8c8c8c" stroke-width="0.7"/><circle cx="8.50" cy="9.90" r="1.35" fill="#f2f2f2" stroke="#8c8c8c" stroke-width="0.7"/><circle cx="9.47" cy="7.57" r="1.35" fill="#f2f2f2" stroke="#8c8c8c" stroke-width="0.7"/><circle cx="11.80" cy="6.60" r="1.35" fill="#f2f2f2" stroke="#8c8c8c" stroke-width="0.7"/><circle cx="14.13" cy="7.57" r="1.35" fill="#f2f2f2" stroke="#8c8c8c" stroke-width="0.7"/><circle cx="11.8" cy="9.9" r="3" fill="#efefef"/><circle cx="11.8" cy="9.9" r="1.1" fill="#3a3a3a"/></svg>
<div class="t" style="left:534px;top:647.50px;font-size:13px;line-height:16px;font-weight:400;color:#111;">Image</div>
<div class="a" style="left:494.5px;top:676.5px;width:13px;height:13px;background:linear-gradient(#ffffff,#e6e6e6);border:1px solid #c6c6c6;border-radius:3px;box-shadow:0 0.5px 1px rgba(0,0,0,0.15);"></div>
<svg style="left:497.5px;top:679.5px" width="7" height="7" viewBox="0 0 7 7"><path d="M0.5 3.5h6M3.5 0.5v6" stroke="#555" stroke-width="1.3"/></svg>
<svg style="left:511px;top:676px" width="18" height="18" viewBox="0 0 18 18"><defs><radialGradient id="gg683" cx="30%" cy="25%" r="80%"><stop offset="0" stop-color="#e4eef6"/><stop offset="0.35" stop-color="#7d9bb6"/><stop offset="1" stop-color="#2f4b66"/></radialGradient></defs><circle cx="7.6" cy="7" r="6.7" fill="url(#gg683)"/><path d="M4 3.2c1.2-1 2.8-1.3 4-.8l-.6 1.4 1.2.4-1.5 1.5-.8-.6-1 1.2-.7-1.5z" fill="#f4f8fb" opacity="0.9"/><circle cx="15.10" cy="9.90" r="1.35" fill="#f2f2f2" stroke="#8c8c8c" stroke-width="0.7"/><circle cx="14.13" cy="12.23" r="1.35" fill="#f2f2f2" stroke="#8c8c8c" stroke-width="0.7"/><circle cx="11.80" cy="13.20" r="1.35" fill="#f2f2f2" stroke="#8c8c8c" stroke-width="0.7"/><circle cx="9.47" cy="12.23" r="1.35" fill="#f2f2f2" stroke="#8c8c8c" stroke-width="0.7"/><circle cx="8.50" cy="9.90" r="1.35" fill="#f2f2f2" stroke="#8c8c8c" stroke-width="0.7"/><circle cx="9.47" cy="7.57" r="1.35" fill="#f2f2f2" stroke="#8c8c8c" stroke-width="0.7"/><circle cx="11.80" cy="6.60" r="1.35" fill="#f2f2f2" stroke="#8c8c8c" stroke-width="0.7"/><circle cx="14.13" cy="7.57" r="1.35" fill="#f2f2f2" stroke="#8c8c8c" stroke-width="0.7"/><circle cx="11.8" cy="9.9" r="3" fill="#efefef"/><circle cx="11.8" cy="9.9" r="1.1" fill="#3a3a3a"/></svg>
<div class="t" style="left:534px;top:675.50px;font-size:13px;line-height:16px;font-weight:400;color:#111;">Road Traffic</div>
<div class="a" style="left:747px;top:247px;width:682px;height:30px;background:#e3e3e3;border-radius:5px;"></div>
<div class="t" style="left:755px;top:252.98px;font-size:14.5px;line-height:18px;font-weight:700;color:#7d9ac4;">System Maintenance</div>
<div class="t" style="left:756px;top:284.50px;font-size:13px;line-height:16px;font-weight:700;color:#111;">System Management</div>
<div class="a" style="left:756px;top:309px;width:664px;height:1px;background:#a8a8a8;"></div>
<div class="a" style="left:913px;top:319px;width:158px;height:21px;background:linear-gradient(#ffffff,#ececec);border:1px solid #c9c9c9;border-bottom-color:#a9a9a9;border-radius:3px;box-shadow:0 1px 0 rgba(0,0,0,0.08);"></div>
<div class="t" style="left:692.0px;width:600px;text-align:center;top:321.70px;font-size:13px;line-height:16px;font-weight:400;color:#111;">Reboot</div>
<div class="a" style="left:913px;top:348px;width:158px;height:21px;background:linear-gradient(#ffffff,#ececec);border:1px solid #c9c9c9;border-bottom-color:#a9a9a9;border-radius:3px;box-shadow:0 1px 0 rgba(0,0,0,0.08);"></div>
<div class="t" style="left:692.0px;width:600px;text-align:center;top:350.70px;font-size:13px;line-height:16px;font-weight:400;color:#111;">Restore Default Settings</div>
<div class="a" style="left:913px;top:378px;width:158px;height:21px;background:linear-gradient(#ffffff,#ececec);border:1px solid #c9c9c9;border-bottom-color:#a9a9a9;border-radius:3px;box-shadow:0 1px 0 rgba(0,0,0,0.08);"></div>
<div class="t" style="left:692.0px;width:600px;text-align:center;top:380.70px;font-size:13px;line-height:16px;font-weight:400;color:#111;">Restore All</div>
<div class="a" style="left:913px;top:408px;width:158px;height:21px;background:linear-gradient(#ffffff,#ececec);border:1px solid #c9c9c9;border-bottom-color:#a9a9a9;border-radius:3px;box-shadow:0 1px 0 rgba(0,0,0,0.08);"></div>
<div class="t" style="left:692.0px;width:600px;text-align:center;top:410.70px;font-size:13px;line-height:16px;font-weight:400;color:#111;">Import Configuration File</div>
<div class="a" style="left:913px;top:437px;width:158px;height:21px;background:linear-gradient(#ffffff,#ececec);border:1px solid #c9c9c9;border-bottom-color:#a9a9a9;border-radius:3px;box-shadow:0 1px 0 rgba(0,0,0,0.08);"></div>
<div class="t" style="left:692.0px;width:600px;text-align:center;top:439.70px;font-size:13px;line-height:16px;font-weight:400;color:#111;">Export Configuration File</div>
<div class="a" style="left:913px;top:467px;width:158px;height:21px;background:linear-gradient(#ffffff,#ececec);border:1px solid #c9c9c9;border-bottom-color:#a9a9a9;border-radius:3px;box-shadow:0 1px 0 rgba(0,0,0,0.08);"></div>
<div class="t" style="left:692.0px;width:600px;text-align:center;top:469.70px;font-size:13px;line-height:16px;font-weight:400;color:#111;">Import/Export IPC Conf...</div>
<div class="t" style="left:756px;top:497.50px;font-size:13px;line-height:16px;font-weight:700;color:#111;">Remote Upgrade</div>
<div class="a" style="left:756px;top:522px;width:664px;height:1px;background:#a8a8a8;"></div>
<div class="a" style="left:757px;top:532px;width:148px;height:24px;background:#fafafa;border:1px solid #c8c8c8;border-radius:2px;"></div>
<div class="a" style="left:887px;top:533px;width:1px;height:22px;background:#cfcfcf;"></div>
<div class="t" style="left:760px;top:535.50px;font-size:13px;line-height:16px;font-weight:400;color:#8a8a8a;">Upgrade File</div>
<svg style="left:892px;top:541px" width="9" height="6" viewBox="0 0 9 6"><path d="M1 1l3.5 3.5L8 1" fill="none" stroke="#b4b4b4" stroke-width="1.3"/></svg>
<div class="a" style="left:913px;top:533px;width:268px;height:21px;background:#fafafa;border:1px solid #c8c8c8;border-radius:2px;"></div>
<div class="a" style="left:1163px;top:534px;width:1px;height:19px;background:#d0d0d0;"></div>
<svg style="left:1166px;top:540px" width="12" height="3" viewBox="0 0 12 3"><rect x="1" y="0.5" width="2" height="2" fill="#444"/><rect x="5" y="0.5" width="2" height="2" fill="#444"/><rect x="9" y="0.5" width="2" height="2" fill="#444"/></svg>
<div class="a" style="left:1189px;top:532px;width:73px;height:23px;background:linear-gradient(#ffffff,#ececec);border:1px solid #c9c9c9;border-bottom-color:#a9a9a9;border-radius:3px;box-shadow:0 1px 0 rgba(0,0,0,0.08);"></div>
<div class="t" style="left:925.5px;width:600px;text-align:center;top:535.70px;font-size:13px;line-height:16px;font-weight:400;color:#111;">Upgrade</div>
<div class="t" style="left:306px;width:600px;text-align:right;top:566.50px;font-size:13px;line-height:16px;font-weight:400;color:#111;">Process:</div>
<div class="a" style="left:912px;top:563px;width:351px;height:23px;background:#dcdcdc;border:1px solid #8c8c8c;border-radius:3px;"></div>
<div class="t" style="left:756px;top:599.50px;font-size:13px;line-height:16px;font-weight:700;color:#111;">Remote IPC Upgrade</div>
<div class="t" style="left:306px;width:600px;text-align:right;top:628.50px;font-size:13px;line-height:16px;font-weight:400;color:#111;">Remote IPC Upgrade:</div>
<div class="a" style="left:913px;top:626px;width:88px;height:22px;background:linear-gradient(#ffffff,#ececec);border:1px solid #c9c9c9;border-bottom-color:#a9a9a9;border-radius:3px;box-shadow:0 1px 0 rgba(0,0,0,0.08);"></div>
<div class="t" style="left:657.0px;width:600px;text-align:center;top:629.20px;font-size:13px;line-height:16px;font-weight:400;color:#111;">IPC Upgrade</div>
<div class="a" style="left:0px;top:1160px;width:1920px;height:40px;background:#101113;"></div>
<svg style="left:16px;top:1172px" width="17" height="17" viewBox="0 0 17 17"><path d="M0 2.3L6.8 1.4V7.9H0zM7.7 1.3L17 0V7.9H7.7zM0 8.8H6.8V15.4L0 14.5zM7.7 8.8H17V17L7.7 15.6z" fill="#fff"/></svg>
<div class="a" style="left:48px;top:1160px;width:344px;height:40px;background:#f0f0f0;"></div>
<svg style="left:58px;top:1170px" width="21" height="21" viewBox="0 0 21 21"><circle cx="10.5" cy="10.5" r="8.9" fill="none" stroke="#111" stroke-width="2.6"/></svg>
<div class="t" style="left:88px;top:1171.94px;font-size:14.6px;line-height:18px;font-weight:400;color:#2a2a2a;">Type here to search</div>
<svg style="left:364px;top:1171px" width="14" height="20" viewBox="0 0 14 20"><rect x="4" y="1" width="6" height="11" rx="3" fill="none" stroke="#333" stroke-width="1.2"/><path d="M1.5 9a5.5 5.5 0 0 0 11 0M7 14.5V18M4 18.5h6" fill="none" stroke="#333" stroke-width="1.2"/></svg>
<svg style="left:405px;top:1172px" width="22" height="16" viewBox="0 0 22 16"><rect x="5.5" y="1" width="11" height="14" fill="none" stroke="#fff" stroke-width="1.3"/><path d="M3 3.5H1.2v9H3M19 3.5h1.8v9H19" fill="none" stroke="#fff" stroke-width="1.3"/></svg>
<svg style="left:456px;top:1170px" width="22" height="20" viewBox="0 0 22 20"><path d="M0.5 2.5h7l1.5 1.5h12.5v13.5h-21z" fill="#f7d675"/><rect x="0.5" y="5" width="21" height="12.5" fill="#fce39a"/><path d="M5 19V12.5h12V19h-3.5v-3.5h-5V19z" fill="#3eb0ec"/></svg>
<svg style="left:504px;top:1168px" width="21" height="24" viewBox="0 0 21 24"><rect x="0.5" y="0.5" width="18" height="23" fill="#e8e8e8"/><rect x="2" y="2" width="15" height="17" fill="#3a6fc8"/><path d="M2 12c4-3 9-1 15-2v9H2z" fill="#dfe8f4"/><path d="M20.5 7L5 21" stroke="#c0282c" stroke-width="1.8"/></svg>
<svg style="left:556px;top:1171px" width="18" height="18" viewBox="0 0 18 18"><circle cx="9" cy="9" r="8.2" fill="#0c0c8a" stroke="#3a3ab0" stroke-width="0.8"/><path d="M11.5 1.5L6.5 16.5" stroke="#fff" stroke-width="1"/></svg>
<svg style="left:603px;top:1169px" width="23" height="22" viewBox="0 0 23 22"><path d="M2 0h19l2 3v19H0V3z" fill="#2fb7dd"/><path d="M4 13V8h4M19 14v4h-4" stroke="#fff" stroke-width="1.4" fill="none"/></svg>
<svg style="left:651px;top:1168px" width="23" height="23" viewBox="0 0 23 23"><circle cx="11.5" cy="11.5" r="11.2" fill="#1ed760"/><path d="M5 8.2c4.5-1.5 9-1 13 1M5.8 11.5c3.8-1.1 7.6-0.7 11 1M6.5 14.6c3-0.8 6-0.5 8.8 0.8" stroke="#111" stroke-width="1.7" fill="none" stroke-linecap="round"/></svg>
<svg style="left:700px;top:1168px" width="24" height="24" viewBox="0 0 24 24"><rect x="0" y="0" width="24" height="24" rx="2" fill="#d8d8d8"/><circle cx="12" cy="12" r="9.5" fill="#3b7ff0"/></svg>
<svg style="left:749px;top:1168px" width="23" height="23" viewBox="0 0 23 23"><circle cx="11.5" cy="11.5" r="11" fill="#3aa757"/><path d="M11.5 11.5L2 6A11 11 0 0 1 21 6z" fill="#db4437"/><path d="M11.5 11.5L21 6A11 11 0 0 1 11.5 22.5z" fill="#fcc934"/><circle cx="11.5" cy="11.5" r="5" fill="#fff"/><circle cx="11.5" cy="11.5" r="3.9" fill="#4a86e8"/></svg>
<div class="a" style="left:741px;top:1198px;width:40px;height:2px;background:#9fd8f2;"></div>
<svg style="left:798px;top:1167px" width="24" height="25" viewBox="0 0 24 25"><defs><radialGradient id="ffo798" cx="60%" cy="30%" r="80%"><stop offset="0" stop-color="#ffe14a"/><stop offset="0.45" stop-color="#ff8a28"/><stop offset="1" stop-color="#e5233a"/></radialGradient><radialGradient id="ffb798" cx="50%" cy="40%" r="60%"><stop offset="0" stop-color="#6a5cf0"/><stop offset="1" stop-color="#2d39b8"/></radialGradient></defs><circle cx="12" cy="13.5" r="10.8" fill="url(#ffo798)"/><circle cx="12.5" cy="12.5" r="5.8" fill="url(#ffb798)"/><path d="M5 9c1 5 4 8 9 8 3 0 5-2 6-4-2 5-7 8-12 6C5 17.5 3.5 13 5 9z" fill="#ff7a1f"/><path d="M15 1.5c4 1.5 7 5 7.5 9.5-1.5-3-3.5-4.5-5.5-5z" fill="#ffd43a"/><path d="M3.5 6.5L5 3.5l1.5 3z" fill="#ff6a2a"/></svg>
<svg style="left:847px;top:1168px" width="24" height="23" viewBox="0 0 24 23"><path d="M4 13h14a7 7 0 1 0-1.5 4.5" fill="none" stroke="#3ab1e8" stroke-width="3.4"/><path d="M2 20c-3-3 8-15 19-18 3 1-1 7-3 8" fill="none" stroke="#f0c419" stroke-width="1.4"/></svg>
<svg style="left:897px;top:1169px" width="21" height="21" viewBox="0 0 21 21"><path d="M3 12h15a7.5 7.5 0 1 0-2 5.5" fill="none" stroke="#1a7ee0" stroke-width="3.6"/><path d="M2.5 9C3 3 12 0 17 5" fill="none" stroke="#1a7ee0" stroke-width="3"/></svg>
<svg style="left:946px;top:1168px" width="23" height="24" viewBox="0 0 23 24"><defs><linearGradient id="opg" x1="0" y1="0" x2="1" y2="1"><stop offset="0" stop-color="#f4f4f4"/><stop offset="0.5" stop-color="#9a9a9a"/><stop offset="1" stop-color="#e0e0e0"/></linearGradient></defs><ellipse cx="11.5" cy="12" rx="9" ry="10" fill="none" stroke="url(#opg)" stroke-width="4.6"/></svg>
<svg style="left:997px;top:1169px" width="19" height="20" viewBox="0 0 19 20"><path d="M0 0h19v15l-4 5H0z" fill="#f2b705"/><circle cx="9.5" cy="8" r="3.8" fill="none" stroke="#fff" stroke-width="1.2"/><path d="M8 13h3" stroke="#fff" stroke-width="1.2"/></svg>
<svg style="left:1043px;top:1168px" width="24" height="24" viewBox="0 0 24 24"><circle cx="11" cy="11" r="10.5" fill="#4aa3e0"/><rect x="5" y="9" width="12" height="4" fill="#2d7cc0" opacity="0.7"/><path d="M18 18l4 4" stroke="#6fb9e6" stroke-width="1.8"/></svg>
<div class="a" style="left:1035px;top:1198px;width:40px;height:2px;background:#9fd8f2;"></div>
<svg style="left:1092px;top:1167px" width="24" height="25" viewBox="0 0 24 25"><defs><radialGradient id="ffo1092" cx="60%" cy="30%" r="80%"><stop offset="0" stop-color="#ffe14a"/><stop offset="0.45" stop-color="#ff8a28"/><stop offset="1" stop-color="#e5233a"/></radialGradient><radialGradient id="ffb1092" cx="50%" cy="40%" r="60%"><stop offset="0" stop-color="#6a5cf0"/><stop offset="1" stop-color="#2d39b8"/></radialGradient></defs><circle cx="12" cy="13.5" r="10.8" fill="url(#ffo1092)"/><circle cx="12.5" cy="12.5" r="5.8" fill="url(#ffb1092)"/><path d="M5 9c1 5 4 8 9 8 3 0 5-2 6-4-2 5-7 8-12 6C5 17.5 3.5 13 5 9z" fill="#ff7a1f"/><path d="M15 1.5c4 1.5 7 5 7.5 9.5-1.5-3-3.5-4.5-5.5-5z" fill="#ffd43a"/><path d="M3.5 6.5L5 3.5l1.5 3z" fill="#ff6a2a"/></svg>
<svg style="left:1142px;top:1170px" width="21" height="20" viewBox="0 0 21 20"><path d="M4 2c3-2 8-1 13 0l-2 6H5z" fill="#3a7fd0"/><rect x="1" y="9" width="19" height="4" fill="#555"/><rect x="1" y="13" width="19" height="5" fill="#d8d8d8"/></svg>
<svg style="left:1191px;top:1168px" width="22" height="22" viewBox="0 0 22 22"><rect width="22" height="22" rx="3" fill="#7b3fb8"/><path d="M7 5c2 5-3 8 1 11 4 2 8-1 6-4-1-2-4-2-5-7z" fill="#e8e0f0"/></svg>
<svg style="left:1239px;top:1168px" width="23" height="23" viewBox="0 0 23 23"><circle cx="11.5" cy="11.5" r="9" fill="none" stroke="#bdbdbd" stroke-width="3.5" stroke-dasharray="2.6 2"/><circle cx="11.5" cy="11" r="5.5" fill="#2ab4f0" stroke="#ddd" stroke-width="1.2"/><path d="M7.5 15l-5 6" stroke="#ccc" stroke-width="2.2"/></svg>
<svg style="left:1288px;top:1168px" width="23" height="24" viewBox="0 0 23 24"><circle cx="11.5" cy="12" r="11" fill="#0b1a2a" stroke="#ddd" stroke-width="1"/><path d="M4 12a7.5 7.5 0 0 1 15 0" fill="none" stroke="#3fa34d" stroke-width="1.2"/><path d="M6 13c2-3 3 2 5.5 0s3-2 5.5 0" fill="none" stroke="#59c3e8" stroke-width="1"/></svg>
<svg style="left:1337px;top:1168px" width="24" height="24" viewBox="0 0 24 24"><defs><radialGradient id="gtg" cx="35%" cy="30%" r="70%"><stop offset="0" stop-color="#b8dcff"/><stop offset="0.5" stop-color="#3a86e0"/><stop offset="1" stop-color="#1a4fa8"/></radialGradient></defs><circle cx="10.5" cy="11.5" r="10" fill="url(#gtg)"/><path d="M9 6.5a3 3 0 0 0 3.5 4L20 20" fill="none" stroke="#dcdcdc" stroke-width="2.2"/><path d="M21.5 3.5L11.5 15.5" stroke="#e8e8e8" stroke-width="1.6"/></svg>
<div class="a" style="left:1374px;top:1160px;width:48px;height:40px;background:#2b2b2c;"></div>
<div class="a" style="left:1374px;top:1198px;width:48px;height:2px;background:#9fd8f2;"></div>
<svg style="left:1385px;top:1170px" width="26" height="24" viewBox="0 0 26 24"><rect x="1" y="1" width="19" height="13" fill="none" stroke="#777" stroke-width="1.6"/><path d="M6 18h9" stroke="#777" stroke-width="1.6"/><circle cx="18.5" cy="15" r="6.5" fill="#1a84e6"/><path d="M18.5 19v-6.5M15.8 15l2.7-2.7 2.7 2.7" stroke="#fff" stroke-width="1.8" fill="none"/></svg>
<svg style="left:1524px;top:1171px" width="18" height="18" viewBox="0 0 18 18"><circle cx="11" cy="5" r="3.2" fill="none" stroke="#ddd" stroke-width="1.1"/><path d="M6 16c0-4 2-7 5-7s5 3 5 7" fill="none" stroke="#ddd" stroke-width="1.1"/><circle cx="5.5" cy="8.5" r="2.6" fill="none" stroke="#ddd" stroke-width="1.1"/><path d="M1 17c0-3 2-5 4.5-5" fill="none" stroke="#ddd" stroke-width="1.1"/></svg>
<svg style="left:1560px;top:1171px" width="17" height="17" viewBox="0 0 17 17"><rect x="0" y="1" width="15" height="13" fill="#4fbf3a"/><rect x="3" y="4" width="9" height="6" fill="#ddd"/><circle cx="11.5" cy="12.5" r="4" fill="#2a9a3a" stroke="#fff" stroke-width="1"/></svg>
<svg style="left:1585px;top:1172px" width="16" height="17" viewBox="0 0 16 17"><path d="M7 0l7 2.5v5c0 4-3 7-7 9-4-2-7-5-7-9v-5z" fill="#fff"/><path d="M7 0v16.5C3 14.5 0 11.5 0 7.5v-5zM7 7.5h7" fill="#222"/><circle cx="11" cy="12.5" r="4" fill="#2a9a3a"/></svg>
<svg style="left:1609px;top:1172px" width="16" height="16" viewBox="0 0 16 16"><circle cx="8" cy="8" r="7.6" fill="#16a6b0"/><circle cx="8" cy="8" r="5.5" fill="#fff"/><path d="M5 8h6a3 3 0 1 0-1 2.2" fill="none" stroke="#16a6b0" stroke-width="1.6"/></svg>
<svg style="left:1634px;top:1171px" width="14" height="19" viewBox="0 0 14 19"><rect x="2" y="5" width="8" height="13" fill="none" stroke="#ddd" stroke-width="1"/><rect x="4" y="1" width="4" height="4" fill="none" stroke="#ddd" stroke-width="1"/><path d="M9 16l2 2 3-4" stroke="#ddd" fill="none"/></svg>
<svg style="left:1657px;top:1172px" width="15" height="14" viewBox="0 0 15 14"><circle cx="4" cy="7" r="2.8" fill="#e52020"/><circle cx="10.5" cy="7" r="2.8" fill="#e52020"/><circle cx="7.3" cy="11" r="2.4" fill="#e52020"/><circle cx="7.3" cy="3" r="2.2" fill="#e52020"/></svg>
<svg style="left:1681px;top:1172px" width="15" height="14" viewBox="0 0 15 14"><circle cx="4" cy="7" r="2.8" fill="#e52020"/><circle cx="10.5" cy="7" r="2.8" fill="#e52020"/><circle cx="7.3" cy="11" r="2.4" fill="#e52020"/><circle cx="7.3" cy="3" r="2.2" fill="#e52020"/></svg>
<svg style="left:1706px;top:1172px" width="15" height="15" viewBox="0 0 15 15"><circle cx="7.5" cy="7.5" r="7" fill="#1a6fd0"/><path d="M8 2c3 1 5 4 3 8l-3 1z" fill="#5cc24a"/></svg>
<svg style="left:1729px;top:1171px" width="17" height="17" viewBox="0 0 17 17"><path d="M2 2c7 1 12 6 13 13" fill="none" stroke="#999" stroke-width="1.4"/><circle cx="6" cy="11" r="3" fill="#aaa"/></svg>
<svg style="left:1753px;top:1172px" width="17" height="16" viewBox="0 0 17 16"><rect x="3" y="2" width="13" height="9" fill="none" stroke="#ddd" stroke-width="1"/><path d="M9.5 11v3M6 14.5h7M0.5 0.5h3v4h-3z" stroke="#ddd" fill="none"/></svg>
<svg style="left:1776px;top:1172px" width="17" height="16" viewBox="0 0 17 16"><path d="M1 5.5h3l4-4v13l-4-4H1z" fill="none" stroke="#ddd" stroke-width="1"/><path d="M10.5 5c1 1.5 1 4.5 0 6M13 3c2 3 2 7 0 10" fill="none" stroke="#ddd" stroke-width="1"/></svg>
<div class="t" style="left:1531px;width:600px;text-align:center;top:1164.34px;font-size:12px;line-height:15px;font-weight:400;color:#f0f0f0;">20:03</div>
<div class="t" style="left:1531px;width:600px;text-align:center;top:1182.34px;font-size:12px;line-height:15px;font-weight:400;color:#f0f0f0;">05/03/2018</div>
<svg style="left:1877px;top:1170px" width="22" height="22" viewBox="0 0 22 22"><path d="M1.5 1.5h13v10h-7l-3 3v-3h-3z" fill="none" stroke="#eee" stroke-width="1.2"/><path d="M4 4.5h8M4 6.5h8M4 8.5h6" stroke="#eee"/><circle cx="15" cy="15" r="6" fill="#2a2a2a" stroke="#999" stroke-width="1"/><text x="15" y="18.5" font-size="9" fill="#fff" text-anchor="middle" font-family="Liberation Sans" font-weight="700">1</text></svg>
<div class="a" style="left:1914px;top:1165px;width:1px;height:35px;background:#5a5a5a;"></div>
</body></html>
